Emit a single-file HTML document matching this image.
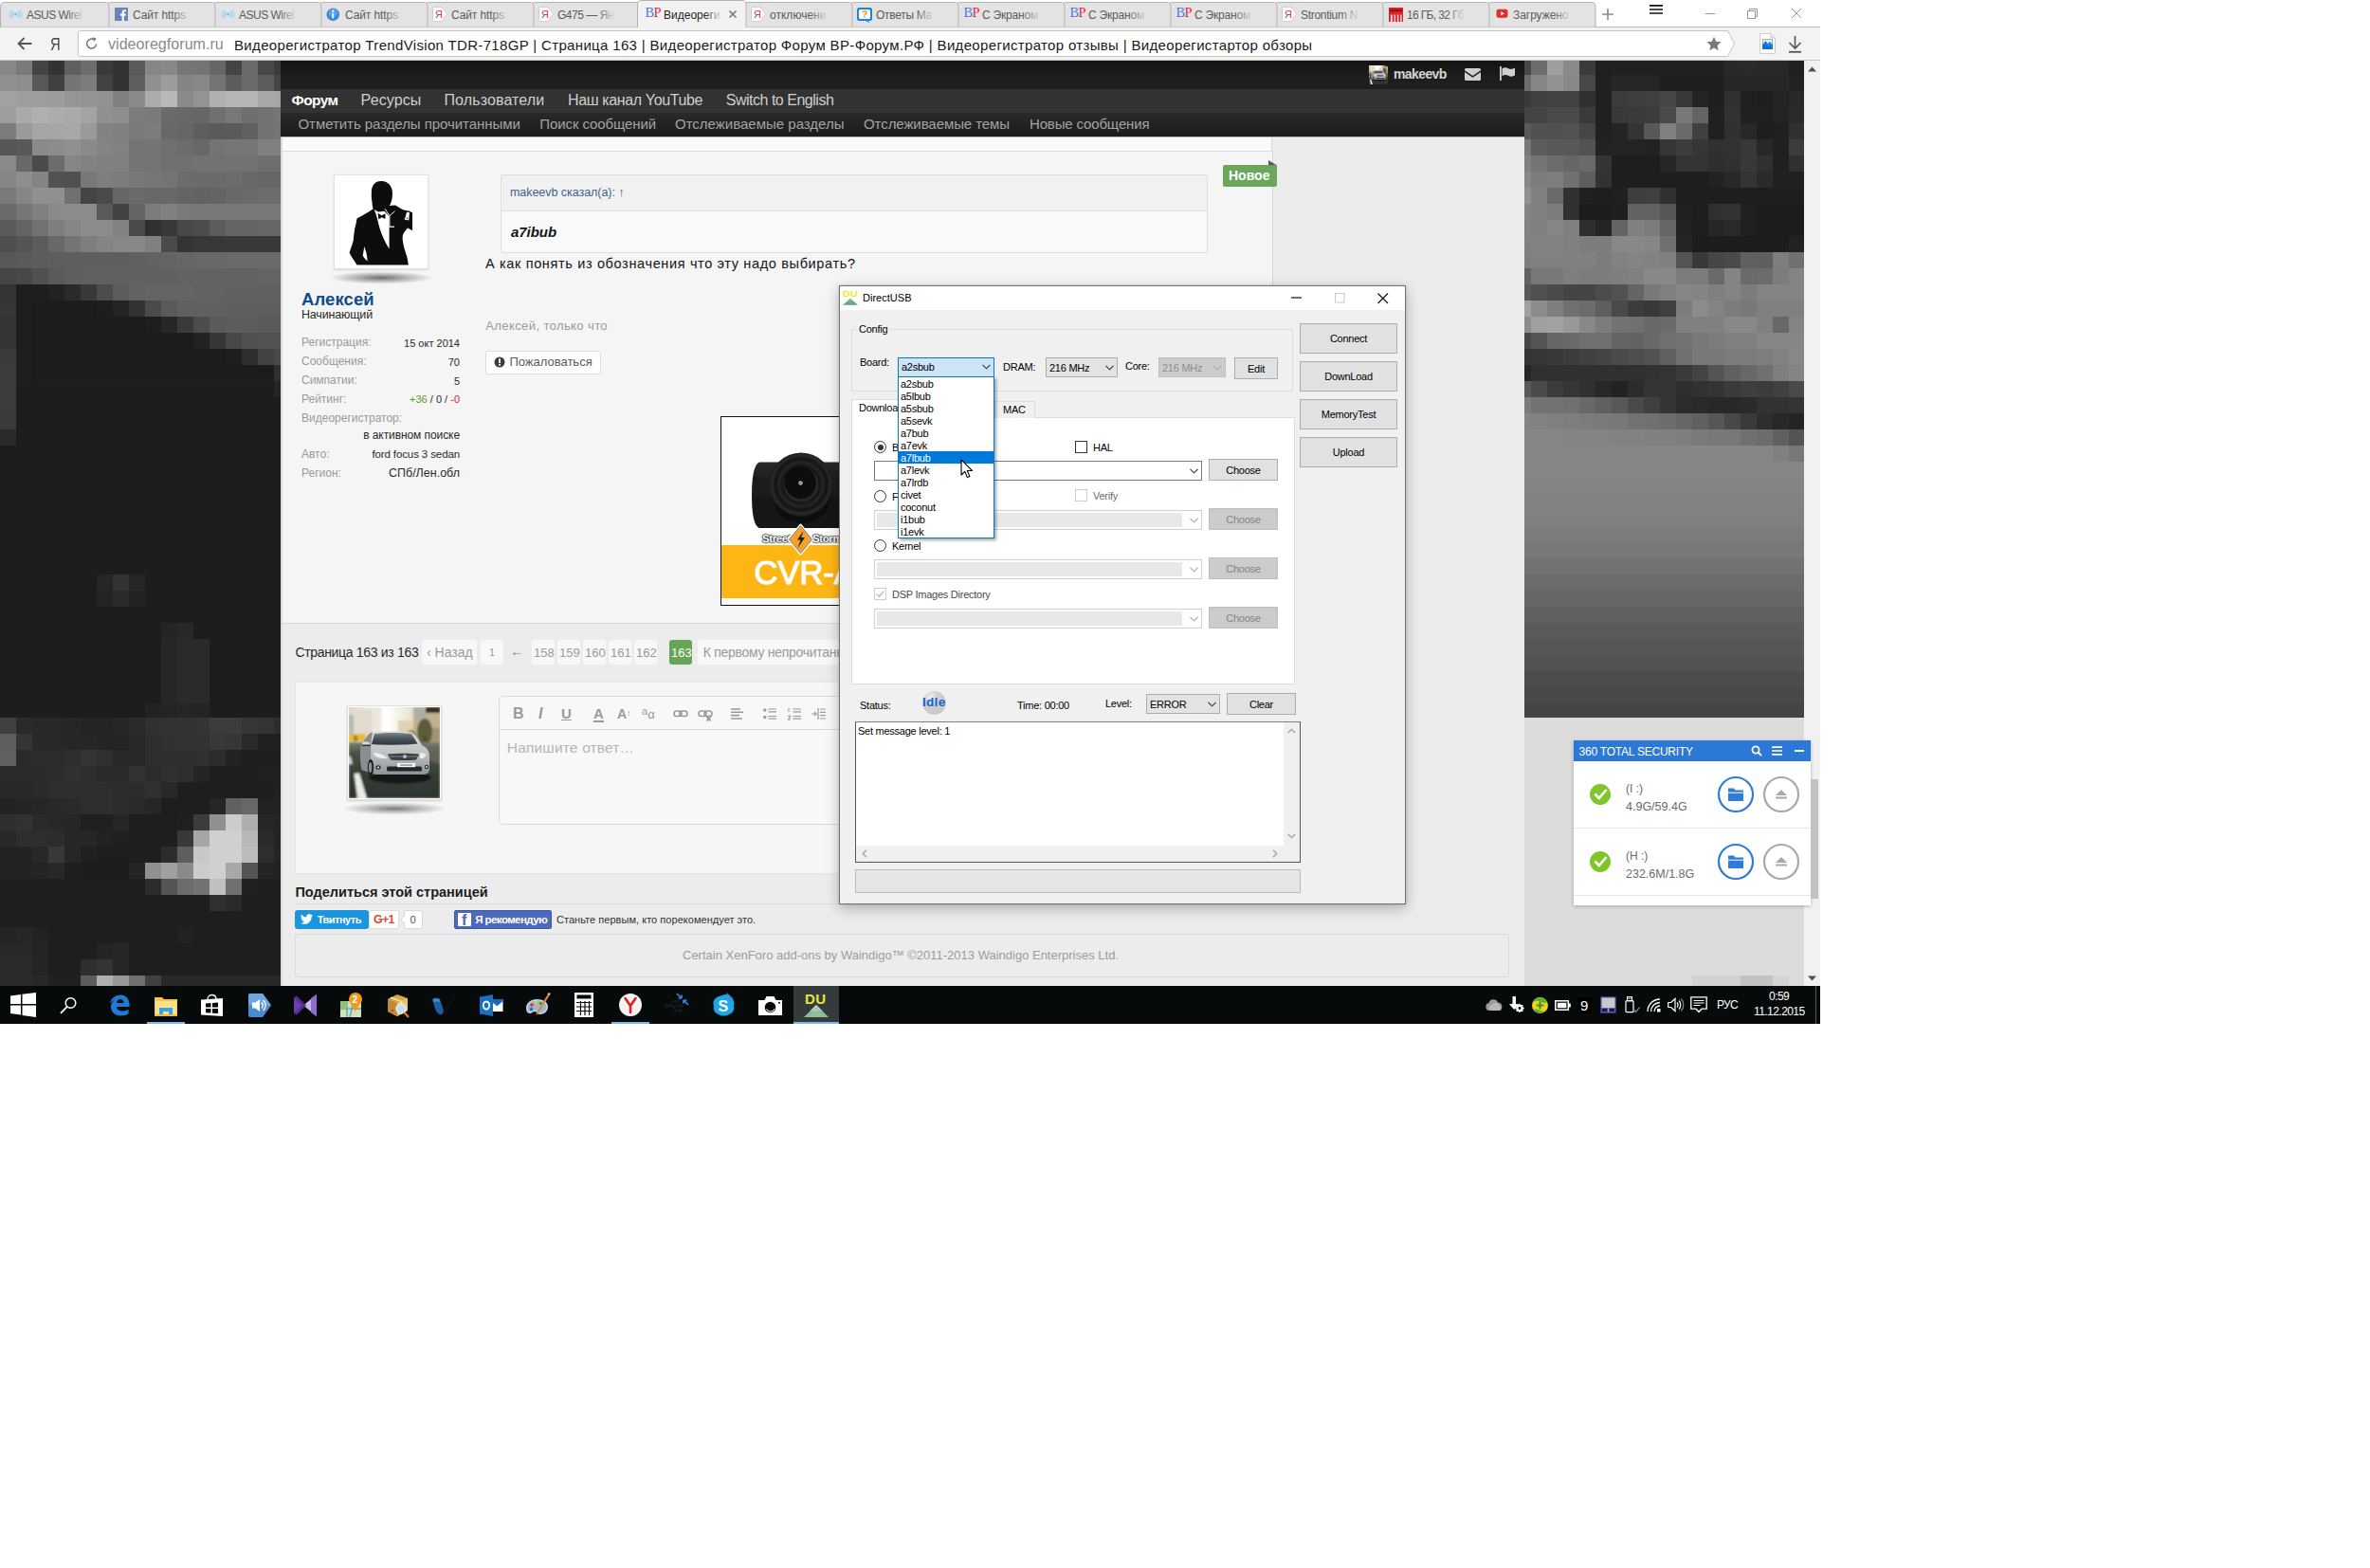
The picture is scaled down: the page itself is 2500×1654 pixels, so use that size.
<!DOCTYPE html>
<html lang="ru">
<head>
<meta charset="utf-8">
<title>DirectUSB screenshot</title>
<style>
*{box-sizing:border-box;margin:0;padding:0}
html,body{width:2500px;height:1654px;background:#fff;overflow:hidden}
body{font-family:"Liberation Sans",sans-serif;font-size:13px;color:#141414;position:relative}
#scr{position:absolute;left:0;top:0;width:1920px;height:1080px;overflow:hidden;background:#ebebeb}
.a{position:absolute;white-space:nowrap;line-height:1}
.bgpix{position:absolute;left:0;top:0}
/* browser chrome */
#tabs{position:absolute;left:0;top:0;width:1920px;height:29px;background:#fff}
#tabstrip{position:absolute;left:0;top:0;width:1920px;height:29px}
.tab{position:absolute;top:1px;height:28px;width:115px;}
.tab .tx{position:absolute;left:28.500px;top:8.600px;font-size:12px;color:#5c5c5c;white-space:nowrap;line-height:1}
.tab .fade{position:absolute;left:70px;top:4px;width:19px;height:20px;background:linear-gradient(90deg,rgba(227,227,227,0),rgba(227,227,227,.85) 90%)}
.tab.act .fade{background:linear-gradient(90deg,rgba(242,242,242,0),rgba(242,242,242,.85) 90%);left:72px;width:17px}
.tab .ic{position:absolute;left:7px;top:5px;width:16px;height:16px}
#toolbar{position:absolute;left:0;top:29px;width:1920px;height:35px;background:#f3f3f3;z-index:2}
#addr{position:absolute;left:83px;top:4px;width:1745px;height:26px;background:#fff;border:1px solid #c9c9c9;border-right:none}

.lb{font-size:12px;color:#9a9a9a;margin-top:.85px}
.vl{right:1435px;font-size:11px;color:#2a2a2a;margin-top:.85px}
.pb{position:absolute;top:675px;height:26px;background:#f8f8f8;border-radius:3px}
.pt{top:681px;font-size:14px;color:#9a9a9a}
.pn{font-size:13px;top:682px}
.du{font-size:11px;color:#000;letter-spacing:-0.250px;margin-top:.85px}
.btn{background:#e1e1e1;border:1px solid #adadad;text-align:center}
.btn span{position:absolute;left:0;right:0;top:50%;margin-top:-4.800px;font-size:11px;line-height:11px;letter-spacing:-0.250px;color:#000}
.btn.bd{background:#cccccc;border-color:#bfbfbf}
.btn.bd span{color:#838383}
.rad{width:13px;height:13px;border:1px solid #333;border-radius:50%;background:#fff}
.rad i{position:absolute;left:2.500px;top:2.500px;width:6px;height:6px;border-radius:50%;background:#333}
.chk{width:13px;height:13px;border:1px solid #333;background:#fff}
.chk.dis{border-color:#ccc;background:#fff}
.cbd{width:346px;height:21px;background:#fff;border:1px solid #d0d0d0;box-shadow:inset 0 0 0 2px #fff}
.cbd:after{content:"";position:absolute;left:2px;top:2px;width:322px;height:15px;background:#e8e8e8}
.tk{position:absolute;top:1040px;height:40px}
#ttl{letter-spacing:0.337px}
#dom{letter-spacing:0.053px}
#mk{letter-spacing:-0.605px}
#n1{letter-spacing:-0.589px}
#n2{letter-spacing:0.101px}
#n3{letter-spacing:0.130px}
#n4{letter-spacing:-0.369px}
#n5{letter-spacing:-0.479px}
#s1{letter-spacing:-0.059px}
#s2{letter-spacing:-0.102px}
#s3{letter-spacing:0.000px}
#s4{letter-spacing:-0.080px}
#s5{letter-spacing:-0.152px}
#q1{letter-spacing:-0.048px}
#q2{letter-spacing:-0.057px}
#m1{letter-spacing:0.645px}
#t0{letter-spacing:-0.514px}
#t1{letter-spacing:-0.114px}
#t2{letter-spacing:-0.514px}
#t3{letter-spacing:-0.114px}
#t4{letter-spacing:-0.114px}
#t5{letter-spacing:-0.470px}
#t6{letter-spacing:0.013px}
#t7{letter-spacing:0.023px}
#t8{letter-spacing:-0.290px}
#t9{letter-spacing:-0.198px}
#t10{letter-spacing:-0.198px}
#t11{letter-spacing:-0.198px}
#t12{letter-spacing:-0.305px}
#t13{letter-spacing:-0.648px}
#t14{letter-spacing:-0.054px}
#u1{letter-spacing:0.096px}
#u2{letter-spacing:-0.169px}
#m2{letter-spacing:0.398px}
#pg{letter-spacing:-0.320px}
#sh{letter-spacing:0.003px}
#tw{letter-spacing:-0.496px}
#fbr{letter-spacing:-0.581px}
#fbt{letter-spacing:0.035px}
#dt{letter-spacing:0.017px}
#ts{letter-spacing:-0.226px}
#ru{letter-spacing:-0.744px}
#ck{letter-spacing:-0.540px}
#dt2{letter-spacing:-0.557px}
#v5{letter-spacing:-0.081px}
#v6{letter-spacing:-0.113px}
#pb9{letter-spacing:-0.288px}
#ph{letter-spacing:0.169px}
</style>
</head>
<body>
<div id="scr">
<div id="tabs">
<div class="a" style="left:0;top:28px;width:1920px;height:1px;background:#b9b9b9"></div>
<div class="tab" style="left:1567.5px"><svg class="a" style="left:0;top:0" width="118" height="28" viewBox="0 0 118 28"><path d="M0.500 28V6q0-4.500 4.500-4.500h106q4 0 4 4.500v22z" fill="#e3e3e3" stroke="#b3b3b3" stroke-width="1"/></svg><svg class="ic" viewBox="0 0 16 16" style="left:9px;top:8px;width:15px;height:12px"><rect y="1" width="16" height="12" rx="3" fill="#e02f2f"/><path d="M6.300 4.200v5.600L11 7z" fill="#fff"/></svg><span id="t14" class="tx">Загружено</span><span class="fade"></span></div>
<div class="tab" style="left:1455.5px"><svg class="a" style="left:0;top:0" width="118" height="28" viewBox="0 0 118 28"><path d="M0.500 28V6q0-4.500 4.500-4.500h106q4 0 4 4.500v22z" fill="#e3e3e3" stroke="#b3b3b3" stroke-width="1"/></svg><svg class="ic" viewBox="0 0 16 16" style="left:9px;top:6.500px;width:15px;height:15px"><rect width="16" height="16" fill="#d9232e"/><path d="M2 16V8h2v8zM6 16V8h1.500v8zM9.500 16V8H11v8zM13 16V8h1.500v8z" fill="#fff" opacity=".85"/><rect x="1" y="2" width="14" height="2.500" fill="#8e1218"/></svg><span id="t13" class="tx">16 ГБ, 32 Гб</span><span class="fade"></span></div>
<div class="tab" style="left:1343.5px"><svg class="a" style="left:0;top:0" width="118" height="28" viewBox="0 0 118 28"><path d="M0.500 28V6q0-4.500 4.500-4.500h106q4 0 4 4.500v22z" fill="#e3e3e3" stroke="#b3b3b3" stroke-width="1"/></svg><svg class="ic" viewBox="0 0 17 16" style="left:8px;top:6px;width:17px;height:16px"><path d="M1.500 .5h8.500l5.500 7.500-5.500 7.500H1.500q-1 0-1-1v-13q0-1 1-1z" fill="#fff" stroke="#cfcfcf" stroke-width="1"/><text x="3" y="12.300" font-family="Liberation Sans" font-size="11" fill="#d6393a">Я</text></svg><span id="t12" class="tx">Strontium N</span><span class="fade"></span></div>
<div class="tab" style="left:1231.5px"><svg class="a" style="left:0;top:0" width="118" height="28" viewBox="0 0 118 28"><path d="M0.500 28V6q0-4.500 4.500-4.500h106q4 0 4 4.500v22z" fill="#e3e3e3" stroke="#b3b3b3" stroke-width="1"/></svg><span class="a" style="left:9px;top:5px;font-family:'Liberation Serif',serif;font-size:14.500px;letter-spacing:-0.700px"><span style="color:#4a7be0">В</span><span style="color:#e0304a">Р</span></span><span id="t11" class="tx">С Экраном</span><span class="fade"></span></div>
<div class="tab" style="left:1119.5px"><svg class="a" style="left:0;top:0" width="118" height="28" viewBox="0 0 118 28"><path d="M0.500 28V6q0-4.500 4.500-4.500h106q4 0 4 4.500v22z" fill="#e3e3e3" stroke="#b3b3b3" stroke-width="1"/></svg><span class="a" style="left:9px;top:5px;font-family:'Liberation Serif',serif;font-size:14.500px;letter-spacing:-0.700px"><span style="color:#4a7be0">В</span><span style="color:#e0304a">Р</span></span><span id="t10" class="tx">С Экраном</span><span class="fade"></span></div>
<div class="tab" style="left:1007.5px"><svg class="a" style="left:0;top:0" width="118" height="28" viewBox="0 0 118 28"><path d="M0.500 28V6q0-4.500 4.500-4.500h106q4 0 4 4.500v22z" fill="#e3e3e3" stroke="#b3b3b3" stroke-width="1"/></svg><span class="a" style="left:9px;top:5px;font-family:'Liberation Serif',serif;font-size:14.500px;letter-spacing:-0.700px"><span style="color:#4a7be0">В</span><span style="color:#e0304a">Р</span></span><span id="t9" class="tx">С Экраном</span><span class="fade"></span></div>
<div class="tab" style="left:895.5px"><svg class="a" style="left:0;top:0" width="118" height="28" viewBox="0 0 118 28"><path d="M0.500 28V6q0-4.500 4.500-4.500h106q4 0 4 4.500v22z" fill="#e3e3e3" stroke="#b3b3b3" stroke-width="1"/></svg><svg class="ic" viewBox="0 0 16 16" style="left:8.500px;top:6.500px;width:16px;height:16px"><path d="M2.500 0h11A2.500 2.500 0 0 1 16 2.500v9a2.500 2.500 0 0 1-2.500 2.500H12l1.500 2.200L9 14H2.500A2.500 2.500 0 0 1 0 11.500v-9A2.500 2.500 0 0 1 2.500 0z" fill="#1b86d6"/><rect x="2" y="2" width="12" height="10" rx="1.500" fill="#fff"/><text x="4.800" y="11.200" font-family="Liberation Sans" font-size="11" font-weight="700" fill="#f59a1c">?</text></svg><span id="t8" class="tx">Ответы Ма</span><span class="fade"></span></div>
<div class="tab" style="left:783.5px"><svg class="a" style="left:0;top:0" width="118" height="28" viewBox="0 0 118 28"><path d="M0.500 28V6q0-4.500 4.500-4.500h106q4 0 4 4.500v22z" fill="#e3e3e3" stroke="#b3b3b3" stroke-width="1"/></svg><svg class="ic" viewBox="0 0 17 16" style="left:8px;top:6px;width:17px;height:16px"><path d="M1.500 .5h8.500l5.500 7.500-5.500 7.500H1.500q-1 0-1-1v-13q0-1 1-1z" fill="#fff" stroke="#cfcfcf" stroke-width="1"/><text x="3" y="12.300" font-family="Liberation Sans" font-size="11" fill="#d6393a">Я</text></svg><span id="t7" class="tx">отключени</span><span class="fade"></span></div>
<div class="tab" style="left:559.5px"><svg class="a" style="left:0;top:0" width="118" height="28" viewBox="0 0 118 28"><path d="M0.500 28V6q0-4.500 4.500-4.500h106q4 0 4 4.500v22z" fill="#e3e3e3" stroke="#b3b3b3" stroke-width="1"/></svg><svg class="ic" viewBox="0 0 17 16" style="left:8px;top:6px;width:17px;height:16px"><path d="M1.500 .5h8.500l5.500 7.500-5.500 7.500H1.500q-1 0-1-1v-13q0-1 1-1z" fill="#fff" stroke="#cfcfcf" stroke-width="1"/><text x="3" y="12.300" font-family="Liberation Sans" font-size="11" fill="#d6393a">Я</text></svg><span id="t5" class="tx">G475 — Ян</span><span class="fade"></span></div>
<div class="tab" style="left:447.5px"><svg class="a" style="left:0;top:0" width="118" height="28" viewBox="0 0 118 28"><path d="M0.500 28V6q0-4.500 4.500-4.500h106q4 0 4 4.500v22z" fill="#e3e3e3" stroke="#b3b3b3" stroke-width="1"/></svg><svg class="ic" viewBox="0 0 17 16" style="left:8px;top:6px;width:17px;height:16px"><path d="M1.500 .5h8.500l5.500 7.500-5.500 7.500H1.500q-1 0-1-1v-13q0-1 1-1z" fill="#fff" stroke="#cfcfcf" stroke-width="1"/><text x="3" y="12.300" font-family="Liberation Sans" font-size="11" fill="#d6393a">Я</text></svg><span id="t4" class="tx">Сайт https:</span><span class="fade"></span></div>
<div class="tab" style="left:335.5px"><svg class="a" style="left:0;top:0" width="118" height="28" viewBox="0 0 118 28"><path d="M0.500 28V6q0-4.500 4.500-4.500h106q4 0 4 4.500v22z" fill="#e3e3e3" stroke="#b3b3b3" stroke-width="1"/></svg><svg class="ic" viewBox="0 0 16 16" style="left:8.800px;top:6.500px;width:14.500px;height:14.500px"><circle cx="8" cy="8" r="7.5" fill="#3d8ad6"/><circle cx="8" cy="6" r="5" fill="#6eb0ea" opacity=".6"/><rect x="7" y="6.500" width="2" height="6" fill="#fff"/><circle cx="8" cy="4.300" r="1.200" fill="#fff"/></svg><span id="t3" class="tx">Сайт https:</span><span class="fade"></span></div>
<div class="tab" style="left:223.5px"><svg class="a" style="left:0;top:0" width="118" height="28" viewBox="0 0 118 28"><path d="M0.500 28V6q0-4.500 4.500-4.500h106q4 0 4 4.500v22z" fill="#e3e3e3" stroke="#b3b3b3" stroke-width="1"/></svg><svg class="ic" viewBox="0 0 16 16" style="left:9px;top:6.500px;width:15px;height:15px"><circle cx="8" cy="7.5" r="1.6" fill="#6cc3ea"/><path d="M5.3 4.6a4 4 0 0 0 0 5.8M10.7 4.6a4 4 0 0 1 0 5.8" stroke="#7cc9ec" stroke-width="1.3" fill="none"/><path d="M3.2 2.8a6.6 6.6 0 0 0 0 9.4M12.8 2.8a6.6 6.6 0 0 1 0 9.4" stroke="#9bd6f0" stroke-width="1.3" fill="none"/></svg><span id="t2" class="tx">ASUS Wirel</span><span class="fade"></span></div>
<div class="tab" style="left:111.5px"><svg class="a" style="left:0;top:0" width="118" height="28" viewBox="0 0 118 28"><path d="M0.500 28V6q0-4.500 4.500-4.500h106q4 0 4 4.500v22z" fill="#e3e3e3" stroke="#b3b3b3" stroke-width="1"/></svg><svg class="ic" viewBox="0 0 16 16" style="left:9.500px;top:7px;width:14px;height:14px"><rect width="16" height="16" fill="#6a83b8"/><path d="M11.2 16V9.9h2l.3-2.4h-2.3V6c0-.7.2-1.2 1.2-1.2h1.2V2.7c-.2 0-1-.1-1.8-.1-1.8 0-3 1.1-3 3.100v1.800H6.700v2.400h2.100V16z" fill="#fff"/></svg><span id="t1" class="tx">Сайт https:</span><span class="fade"></span></div>
<div class="tab" style="left:-0.5px"><!--t0--><svg class="a" style="left:0;top:0" width="118" height="28" viewBox="0 0 118 28"><path d="M0.500 28V6q0-4.500 4.500-4.500h106q4 0 4 4.500v22z" fill="#e3e3e3" stroke="#b3b3b3" stroke-width="1"/></svg><svg class="ic" viewBox="0 0 16 16" style="left:9px;top:6.500px;width:15px;height:15px"><circle cx="8" cy="7.5" r="1.6" fill="#6cc3ea"/><path d="M5.3 4.6a4 4 0 0 0 0 5.8M10.7 4.6a4 4 0 0 1 0 5.8" stroke="#7cc9ec" stroke-width="1.3" fill="none"/><path d="M3.2 2.8a6.6 6.6 0 0 0 0 9.4M12.8 2.8a6.6 6.6 0 0 1 0 9.4" stroke="#9bd6f0" stroke-width="1.3" fill="none"/></svg><span id="t0" class="tx">ASUS Wirel</span><span class="fade"></span></div>
<div class="tab act" style="left:671.5px;top:0;height:29px"><svg class="a" style="left:0;top:0" width="118" height="29" viewBox="0 0 118 29"><path d="M0.500 29V5q0-4.500 4.500-4.500h106q4 0 4 4.500v24z" fill="#f2f2f2" stroke="#b3b3b3" stroke-width="1"/><rect x="1" y="28" width="114" height="1" fill="#f2f2f2"/></svg><span class="a" style="left:9px;top:6px;font-family:'Liberation Serif',serif;font-size:14.500px;letter-spacing:-0.700px"><span style="color:#4a7be0">В</span><span style="color:#e0304a">Р</span></span><span id="t6" class="tx" style="color:#222;top:9.600px">Видеореги</span><span class="fade"></span><svg class="a" style="left:96px;top:10px" width="10" height="10" viewBox="0 0 10 10"><path d="M1.500 1.500l7 7M8.500 1.500l-7 7" stroke="#7a7a7a" stroke-width="1.700"/></svg></div>
<svg class="a" style="left:1689px;top:8px" width="14" height="14" viewBox="0 0 14 14"><path d="M7 1v12M1 7h12" stroke="#8c8c8c" stroke-width="1.600"/></svg>
<svg class="a" style="left:1740px;top:4px" width="14" height="12" viewBox="0 0 14 12"><path d="M0 1.800h14M0 6h14M0 10h14" stroke="#111" stroke-width="1.700"/></svg>
<svg class="a" style="left:1799px;top:9px" width="10" height="10" viewBox="0 0 10 10"><path d="M0 5.500h10" stroke="#999" stroke-width="1"/></svg>
<svg class="a" style="left:1843px;top:9px" width="11" height="11" viewBox="0 0 11 11"><path d="M2.500 2.500v-2h8v8h-2" stroke="#999" fill="none"/><rect x=".5" y="2.500" width="8" height="8" stroke="#999" fill="none"/></svg>
<svg class="a" style="left:1890px;top:9px" width="10" height="10" viewBox="0 0 10 10"><path d="M0 0l10 10M10 0L0 10" stroke="#999" stroke-width="1"/></svg>
</div>
<div id="toolbar">
<div class="a" style="left:0;top:33.500px;width:1920px;height:1.500px;background:linear-gradient(#ededed,#9a9a9a)"></div>
<svg class="a" style="left:18px;top:10px" width="16" height="14" viewBox="0 0 16 14"><path d="M15.500 7H2M7.500 1L1.500 7l6 6" stroke="#555" stroke-width="1.800" fill="none"/></svg>
<span class="a" style="left:53px;top:8px;font-size:19px;color:#444;transform:scaleX(.78);transform-origin:0 0">Я</span>
<svg class="a" style="left:82px;top:3px" width="1750" height="28" viewBox="0 0 1750 28"><path d="M2.500 .5H1740.500L1747.500 14 1740.500 27.500H2.500q-2 0-2-2V2.500q0-2 2-2z" fill="#fff" stroke="#c3c3c3"/></svg>
<svg class="a" style="left:90px;top:9px" width="14" height="15" viewBox="0 0 14 15"><path d="M11.600 8.500a5 5 0 1 1-2.100-4.600" stroke="#777" stroke-width="1.500" fill="none"/><path d="M7.500 1.200l4.200 1.200-2.400 3.400z" fill="#777"/></svg>
<span id="dom" class="a" style="left:114px;top:10px;font-size:16px;color:#8a8a8a">videoregforum.ru</span>
<span id="ttl" class="a" style="left:247px;top:10.700px;font-size:15px;color:#1a1a1a">Видеорегистратор TrendVision TDR-718GP | Страница 163 | Видеорегистратор Форум ВР-Форум.РФ | Видеорегистратор отзывы | Видеорегистартор обзоры</span>
<svg class="a" style="left:1800px;top:9px" width="16" height="16" viewBox="0 0 16 16"><path d="M8 .8l2.200 5 5.300.5-4 3.600 1.200 5.300L8 12.400 3.300 15.200l1.200-5.300-4-3.600 5.300-.5z" fill="#7a7a7a"/></svg>
<svg class="a" style="left:1856px;top:6px" width="17" height="22" viewBox="0 0 17 22"><path d="M.5 .5h11.500l4.500 4.500v16.500H.5z" fill="#fdfdfd" stroke="#cfcfcf"/><path d="M12 .5v4.500h4.500" fill="#e8e8e8" stroke="#cfcfcf"/><rect x="3" y="6.500" width="11" height="10.500" fill="#0a6fd8"/><path d="M3 15l3.500-5 2.200 3 1.800-2.200L14 15v2H3z" fill="#9fd0ff"/><path d="M3 17v-2.500l3.500-4.500 2.300 3.200 1.700-2 3.500 4V17z" fill="#0a6fd8"/><path d="M3.500 7h10v5l-2.800-3-1.900 2.300L6.500 8 3.500 12z" fill="#e9f4ff"/></svg>
<svg class="a" style="left:1886px;top:9px" width="15" height="18" viewBox="0 0 15 18"><path d="M7.500 0v12.500M1.500 7l6 6 6-6" stroke="#555" stroke-width="1.600" fill="none"/><path d="M1 16.800h13" stroke="#555" stroke-width="1.800"/></svg>
</div>
<svg class="bgpix" width="1920" height="1080" viewBox="0 0 1920 1080" shape-rendering="crispEdges">
<rect x="0" y="62" width="296" height="978" fill="#1d1d1d"/>
<rect x="0" y="62" width="17" height="17" fill="#888888"/>
<rect x="17" y="62" width="17" height="17" fill="#7a7a7a"/>
<rect x="34" y="62" width="17" height="17" fill="#444444"/>
<rect x="51" y="62" width="17" height="17" fill="#333333"/>
<rect x="68" y="62" width="17" height="17" fill="#606060"/>
<rect x="85" y="62" width="17" height="17" fill="#6c6c6c"/>
<rect x="102" y="62" width="17" height="17" fill="#3a3a3a"/>
<rect x="119" y="62" width="17" height="17" fill="#333333"/>
<rect x="136" y="62" width="17" height="17" fill="#5a5a5a"/>
<rect x="153" y="62" width="17" height="17" fill="#868686"/>
<rect x="170" y="62" width="17" height="17" fill="#888888"/>
<rect x="187" y="62" width="17" height="17" fill="#767676"/>
<rect x="204" y="62" width="17" height="17" fill="#747474"/>
<rect x="221" y="62" width="17" height="17" fill="#666666"/>
<rect x="238" y="62" width="17" height="17" fill="#444444"/>
<rect x="255" y="62" width="17" height="17" fill="#6a6a6a"/>
<rect x="272" y="62" width="17" height="17" fill="#484848"/>
<rect x="289" y="62" width="7" height="17" fill="#3a3a3a"/>
<rect x="0" y="79" width="17" height="17" fill="#909090"/>
<rect x="17" y="79" width="17" height="17" fill="#8e8e8e"/>
<rect x="34" y="79" width="17" height="17" fill="#585858"/>
<rect x="51" y="79" width="17" height="17" fill="#404040"/>
<rect x="68" y="79" width="17" height="17" fill="#747474"/>
<rect x="85" y="79" width="17" height="17" fill="#7c7c7c"/>
<rect x="102" y="79" width="17" height="17" fill="#424242"/>
<rect x="119" y="79" width="17" height="17" fill="#333333"/>
<rect x="136" y="79" width="17" height="17" fill="#5e5e5e"/>
<rect x="153" y="79" width="17" height="17" fill="#909090"/>
<rect x="170" y="79" width="17" height="17" fill="#9c9c9c"/>
<rect x="187" y="79" width="17" height="17" fill="#848484"/>
<rect x="204" y="79" width="17" height="17" fill="#888888"/>
<rect x="221" y="79" width="17" height="17" fill="#747474"/>
<rect x="238" y="79" width="17" height="17" fill="#5c5c5c"/>
<rect x="255" y="79" width="17" height="17" fill="#6a6a6a"/>
<rect x="272" y="79" width="17" height="17" fill="#5c5c5c"/>
<rect x="289" y="79" width="7" height="17" fill="#444444"/>
<rect x="0" y="96" width="17" height="17" fill="#a2a2a2"/>
<rect x="17" y="96" width="34" height="17" fill="#9e9e9e"/>
<rect x="51" y="96" width="17" height="17" fill="#9c9c9c"/>
<rect x="68" y="96" width="17" height="17" fill="#969696"/>
<rect x="85" y="96" width="17" height="17" fill="#949494"/>
<rect x="102" y="96" width="17" height="17" fill="#929292"/>
<rect x="119" y="96" width="17" height="17" fill="#808080"/>
<rect x="136" y="96" width="17" height="17" fill="#8a8a8a"/>
<rect x="153" y="96" width="17" height="17" fill="#acacac"/>
<rect x="170" y="96" width="17" height="17" fill="#b8b8b8"/>
<rect x="187" y="96" width="17" height="17" fill="#8a8a8a"/>
<rect x="204" y="96" width="17" height="17" fill="#949494"/>
<rect x="221" y="96" width="17" height="17" fill="#b0b0b0"/>
<rect x="238" y="96" width="34" height="17" fill="#b6b6b6"/>
<rect x="272" y="96" width="17" height="17" fill="#a8a8a8"/>
<rect x="289" y="96" width="7" height="17" fill="#a6a6a6"/>
<rect x="0" y="113" width="17" height="17" fill="#9e9e9e"/>
<rect x="17" y="113" width="17" height="17" fill="#aaaaaa"/>
<rect x="34" y="113" width="17" height="17" fill="#b0b0b0"/>
<rect x="51" y="113" width="17" height="17" fill="#acacac"/>
<rect x="68" y="113" width="17" height="17" fill="#aaaaaa"/>
<rect x="85" y="113" width="17" height="17" fill="#a4a4a4"/>
<rect x="102" y="113" width="17" height="17" fill="#909090"/>
<rect x="119" y="113" width="17" height="17" fill="#8e8e8e"/>
<rect x="136" y="113" width="17" height="17" fill="#7c7c7c"/>
<rect x="153" y="113" width="17" height="17" fill="#7a7a7a"/>
<rect x="170" y="113" width="17" height="17" fill="#6a6a6a"/>
<rect x="187" y="113" width="17" height="17" fill="#686868"/>
<rect x="204" y="113" width="17" height="17" fill="#666666"/>
<rect x="221" y="113" width="17" height="17" fill="#707070"/>
<rect x="238" y="113" width="17" height="17" fill="#787878"/>
<rect x="255" y="113" width="17" height="17" fill="#6e6e6e"/>
<rect x="272" y="113" width="17" height="17" fill="#727272"/>
<rect x="289" y="113" width="7" height="17" fill="#767676"/>
<rect x="0" y="130" width="17" height="17" fill="#7c7c7c"/>
<rect x="17" y="130" width="17" height="17" fill="#9a9a9a"/>
<rect x="34" y="130" width="34" height="17" fill="#a6a6a6"/>
<rect x="68" y="130" width="17" height="17" fill="#a8a8a8"/>
<rect x="85" y="130" width="17" height="17" fill="#9a9a9a"/>
<rect x="102" y="130" width="17" height="17" fill="#828282"/>
<rect x="119" y="130" width="17" height="17" fill="#808080"/>
<rect x="136" y="130" width="17" height="17" fill="#7a7a7a"/>
<rect x="153" y="130" width="17" height="17" fill="#7c7c7c"/>
<rect x="170" y="130" width="17" height="17" fill="#686868"/>
<rect x="187" y="130" width="17" height="17" fill="#666666"/>
<rect x="204" y="130" width="17" height="17" fill="#5e5e5e"/>
<rect x="221" y="130" width="34" height="17" fill="#5a5a5a"/>
<rect x="255" y="130" width="17" height="17" fill="#606060"/>
<rect x="272" y="130" width="17" height="17" fill="#727272"/>
<rect x="289" y="130" width="7" height="17" fill="#747474"/>
<rect x="0" y="147" width="17" height="17" fill="#565656"/>
<rect x="17" y="147" width="17" height="17" fill="#585858"/>
<rect x="34" y="147" width="17" height="17" fill="#8a8a8a"/>
<rect x="51" y="147" width="17" height="17" fill="#8c8c8c"/>
<rect x="68" y="147" width="17" height="17" fill="#909090"/>
<rect x="85" y="147" width="17" height="17" fill="#8a8a8a"/>
<rect x="102" y="147" width="17" height="17" fill="#848484"/>
<rect x="119" y="147" width="17" height="17" fill="#828282"/>
<rect x="136" y="147" width="34" height="17" fill="#747474"/>
<rect x="170" y="147" width="17" height="17" fill="#707070"/>
<rect x="187" y="147" width="17" height="17" fill="#6c6c6c"/>
<rect x="204" y="147" width="17" height="17" fill="#686868"/>
<rect x="221" y="147" width="17" height="17" fill="#747474"/>
<rect x="238" y="147" width="34" height="17" fill="#767676"/>
<rect x="272" y="147" width="24" height="17" fill="#808080"/>
<rect x="0" y="164" width="17" height="17" fill="#8a8a8a"/>
<rect x="17" y="164" width="17" height="17" fill="#686868"/>
<rect x="34" y="164" width="17" height="17" fill="#4a4a4a"/>
<rect x="51" y="164" width="17" height="17" fill="#6c6c6c"/>
<rect x="68" y="164" width="17" height="17" fill="#868686"/>
<rect x="85" y="164" width="17" height="17" fill="#828282"/>
<rect x="102" y="164" width="34" height="17" fill="#808080"/>
<rect x="136" y="164" width="34" height="17" fill="#747474"/>
<rect x="170" y="164" width="34" height="17" fill="#707070"/>
<rect x="204" y="164" width="68" height="17" fill="#727272"/>
<rect x="272" y="164" width="24" height="17" fill="#6e6e6e"/>
<rect x="0" y="181" width="17" height="17" fill="#868686"/>
<rect x="17" y="181" width="17" height="17" fill="#8e8e8e"/>
<rect x="34" y="181" width="17" height="17" fill="#848484"/>
<rect x="51" y="181" width="17" height="17" fill="#525252"/>
<rect x="68" y="181" width="17" height="17" fill="#505050"/>
<rect x="85" y="181" width="17" height="17" fill="#787878"/>
<rect x="102" y="181" width="17" height="17" fill="#7e7e7e"/>
<rect x="119" y="181" width="17" height="17" fill="#7c7c7c"/>
<rect x="136" y="181" width="17" height="17" fill="#787878"/>
<rect x="153" y="181" width="17" height="17" fill="#767676"/>
<rect x="170" y="181" width="17" height="17" fill="#747474"/>
<rect x="187" y="181" width="17" height="17" fill="#6c6c6c"/>
<rect x="204" y="181" width="34" height="17" fill="#6a6a6a"/>
<rect x="238" y="181" width="17" height="17" fill="#6c6c6c"/>
<rect x="255" y="181" width="17" height="17" fill="#686868"/>
<rect x="272" y="181" width="24" height="17" fill="#666666"/>
<rect x="0" y="198" width="17" height="17" fill="#7a7a7a"/>
<rect x="17" y="198" width="17" height="17" fill="#868686"/>
<rect x="34" y="198" width="34" height="17" fill="#909090"/>
<rect x="68" y="198" width="17" height="17" fill="#707070"/>
<rect x="85" y="198" width="17" height="17" fill="#444444"/>
<rect x="102" y="198" width="17" height="17" fill="#4a4a4a"/>
<rect x="119" y="198" width="17" height="17" fill="#666666"/>
<rect x="136" y="198" width="17" height="17" fill="#6a6a6a"/>
<rect x="153" y="198" width="34" height="17" fill="#686868"/>
<rect x="187" y="198" width="17" height="17" fill="#646464"/>
<rect x="204" y="198" width="17" height="17" fill="#626262"/>
<rect x="221" y="198" width="17" height="17" fill="#646464"/>
<rect x="238" y="198" width="17" height="17" fill="#686868"/>
<rect x="255" y="198" width="17" height="17" fill="#6a6a6a"/>
<rect x="272" y="198" width="24" height="17" fill="#6c6c6c"/>
<rect x="0" y="215" width="17" height="17" fill="#6a6a6a"/>
<rect x="17" y="215" width="17" height="17" fill="#767676"/>
<rect x="34" y="215" width="17" height="17" fill="#808080"/>
<rect x="51" y="215" width="17" height="17" fill="#8a8a8a"/>
<rect x="68" y="215" width="34" height="17" fill="#8c8c8c"/>
<rect x="102" y="215" width="17" height="17" fill="#5a5a5a"/>
<rect x="119" y="215" width="17" height="17" fill="#424242"/>
<rect x="136" y="215" width="17" height="17" fill="#646464"/>
<rect x="153" y="215" width="17" height="17" fill="#7c7c7c"/>
<rect x="170" y="215" width="17" height="17" fill="#808080"/>
<rect x="187" y="215" width="17" height="17" fill="#7a7a7a"/>
<rect x="204" y="215" width="92" height="17" fill="#787878"/>
<rect x="0" y="232" width="17" height="17" fill="#5a5a5a"/>
<rect x="17" y="232" width="17" height="17" fill="#646464"/>
<rect x="34" y="232" width="17" height="17" fill="#727272"/>
<rect x="51" y="232" width="17" height="17" fill="#7e7e7e"/>
<rect x="68" y="232" width="17" height="17" fill="#868686"/>
<rect x="85" y="232" width="34" height="17" fill="#8c8c8c"/>
<rect x="119" y="232" width="17" height="17" fill="#828282"/>
<rect x="136" y="232" width="17" height="17" fill="#4a4a4a"/>
<rect x="153" y="232" width="17" height="17" fill="#303030"/>
<rect x="170" y="232" width="17" height="17" fill="#383838"/>
<rect x="187" y="232" width="17" height="17" fill="#484848"/>
<rect x="204" y="232" width="17" height="17" fill="#4c4c4c"/>
<rect x="221" y="232" width="17" height="17" fill="#5c5c5c"/>
<rect x="238" y="232" width="34" height="17" fill="#646464"/>
<rect x="272" y="232" width="24" height="17" fill="#666666"/>
<rect x="0" y="249" width="17" height="17" fill="#4e4e4e"/>
<rect x="17" y="249" width="17" height="17" fill="#545454"/>
<rect x="34" y="249" width="17" height="17" fill="#5c5c5c"/>
<rect x="51" y="249" width="17" height="17" fill="#686868"/>
<rect x="68" y="249" width="17" height="17" fill="#747474"/>
<rect x="85" y="249" width="17" height="17" fill="#7e7e7e"/>
<rect x="102" y="249" width="17" height="17" fill="#848484"/>
<rect x="119" y="249" width="34" height="17" fill="#888888"/>
<rect x="153" y="249" width="17" height="17" fill="#808080"/>
<rect x="170" y="249" width="17" height="17" fill="#4a4a4a"/>
<rect x="187" y="249" width="17" height="17" fill="#343434"/>
<rect x="204" y="249" width="92" height="17" fill="#383838"/>
<rect x="0" y="266" width="17" height="17" fill="#585858"/>
<rect x="17" y="266" width="17" height="17" fill="#5a5a5a"/>
<rect x="34" y="266" width="17" height="17" fill="#5c5c5c"/>
<rect x="51" y="266" width="85" height="17" fill="#5e5e5e"/>
<rect x="136" y="266" width="17" height="17" fill="#606060"/>
<rect x="153" y="266" width="17" height="17" fill="#626262"/>
<rect x="170" y="266" width="17" height="17" fill="#646464"/>
<rect x="187" y="266" width="17" height="17" fill="#666666"/>
<rect x="204" y="266" width="34" height="17" fill="#686868"/>
<rect x="238" y="266" width="58" height="17" fill="#6a6a6a"/>
<rect x="0" y="283" width="17" height="17" fill="#464646"/>
<rect x="17" y="283" width="17" height="17" fill="#484848"/>
<rect x="34" y="283" width="17" height="17" fill="#505050"/>
<rect x="51" y="283" width="17" height="17" fill="#5a5a5a"/>
<rect x="68" y="283" width="17" height="17" fill="#5e5e5e"/>
<rect x="85" y="283" width="102" height="17" fill="#606060"/>
<rect x="187" y="283" width="85" height="17" fill="#626262"/>
<rect x="272" y="283" width="24" height="17" fill="#646464"/>
<rect x="0" y="300" width="17" height="17" fill="#343434"/>
<rect x="17" y="300" width="34" height="17" fill="#1e1e1e"/>
<rect x="51" y="300" width="17" height="17" fill="#222222"/>
<rect x="68" y="300" width="17" height="17" fill="#2a2a2a"/>
<rect x="85" y="300" width="17" height="17" fill="#383838"/>
<rect x="102" y="300" width="17" height="17" fill="#4c4c4c"/>
<rect x="119" y="300" width="17" height="17" fill="#5c5c5c"/>
<rect x="136" y="300" width="17" height="17" fill="#626262"/>
<rect x="153" y="300" width="51" height="17" fill="#646464"/>
<rect x="204" y="300" width="34" height="17" fill="#626262"/>
<rect x="238" y="300" width="58" height="17" fill="#606060"/>
<rect x="0" y="317" width="17" height="17" fill="#363636"/>
<rect x="17" y="317" width="17" height="17" fill="#1e1e1e"/>
<rect x="34" y="317" width="68" height="17" fill="#1c1c1c"/>
<rect x="102" y="317" width="17" height="17" fill="#1e1e1e"/>
<rect x="119" y="317" width="17" height="17" fill="#242424"/>
<rect x="136" y="317" width="17" height="17" fill="#323232"/>
<rect x="153" y="317" width="17" height="17" fill="#4a4a4a"/>
<rect x="170" y="317" width="17" height="17" fill="#5a5a5a"/>
<rect x="187" y="317" width="51" height="17" fill="#606060"/>
<rect x="238" y="317" width="58" height="17" fill="#5e5e5e"/>
<rect x="0" y="334" width="17" height="17" fill="#343434"/>
<rect x="17" y="334" width="17" height="17" fill="#1e1e1e"/>
<rect x="34" y="334" width="119" height="17" fill="#1c1c1c"/>
<rect x="153" y="334" width="17" height="17" fill="#1e1e1e"/>
<rect x="170" y="334" width="17" height="17" fill="#262626"/>
<rect x="187" y="334" width="17" height="17" fill="#3a3a3a"/>
<rect x="204" y="334" width="17" height="17" fill="#4c4c4c"/>
<rect x="221" y="334" width="17" height="17" fill="#5a5a5a"/>
<rect x="238" y="334" width="34" height="17" fill="#5c5c5c"/>
<rect x="272" y="334" width="24" height="17" fill="#5a5a5a"/>
<rect x="0" y="351" width="17" height="17" fill="#343434"/>
<rect x="17" y="351" width="17" height="17" fill="#1e1e1e"/>
<rect x="34" y="351" width="170" height="17" fill="#1c1c1c"/>
<rect x="204" y="351" width="17" height="17" fill="#222222"/>
<rect x="221" y="351" width="17" height="17" fill="#363636"/>
<rect x="238" y="351" width="17" height="17" fill="#484848"/>
<rect x="255" y="351" width="17" height="17" fill="#505050"/>
<rect x="272" y="351" width="24" height="17" fill="#525252"/>
<rect x="0" y="368" width="17" height="17" fill="#3a3a3a"/>
<rect x="17" y="368" width="17" height="17" fill="#1e1e1e"/>
<rect x="34" y="368" width="204" height="17" fill="#1c1c1c"/>
<rect x="238" y="368" width="17" height="17" fill="#1e1e1e"/>
<rect x="255" y="368" width="17" height="17" fill="#2e2e2e"/>
<rect x="272" y="368" width="17" height="17" fill="#424242"/>
<rect x="289" y="368" width="7" height="17" fill="#484848"/>
<rect x="0" y="385" width="17" height="17" fill="#3c3c3c"/>
<rect x="17" y="385" width="17" height="17" fill="#1e1e1e"/>
<rect x="34" y="385" width="255" height="17" fill="#1c1c1c"/>
<rect x="289" y="385" width="7" height="17" fill="#303030"/>
<rect x="0" y="402" width="17" height="17" fill="#3c3c3c"/>
<rect x="289" y="402" width="7" height="17" fill="#262626"/>
<rect x="0" y="419" width="17" height="17" fill="#3c3c3c"/>
<rect x="0" y="436" width="17" height="17" fill="#3a3a3a"/>
<rect x="0" y="453" width="17" height="17" fill="#2a2a2a"/>
<rect x="102" y="606" width="17" height="17" fill="#262626"/>
<rect x="119" y="606" width="17" height="17" fill="#323232"/>
<rect x="136" y="606" width="17" height="17" fill="#262626"/>
<rect x="102" y="623" width="17" height="17" fill="#242424"/>
<rect x="119" y="623" width="17" height="17" fill="#2a2a2a"/>
<rect x="136" y="623" width="17" height="17" fill="#222222"/>
<rect x="170" y="657" width="17" height="17" fill="#242424"/>
<rect x="187" y="657" width="17" height="17" fill="#282828"/>
<rect x="170" y="674" width="17" height="17" fill="#262626"/>
<rect x="187" y="674" width="34" height="17" fill="#2a2a2a"/>
<rect x="170" y="691" width="17" height="17" fill="#262626"/>
<rect x="187" y="691" width="34" height="17" fill="#2a2a2a"/>
<rect x="170" y="708" width="17" height="17" fill="#262626"/>
<rect x="187" y="708" width="34" height="17" fill="#2a2a2a"/>
<rect x="170" y="725" width="17" height="17" fill="#262626"/>
<rect x="187" y="725" width="34" height="17" fill="#2a2a2a"/>
<rect x="153" y="742" width="17" height="15" fill="#222222"/>
<rect x="170" y="742" width="17" height="15" fill="#242424"/>
<rect x="187" y="742" width="17" height="15" fill="#262626"/>
<rect x="204" y="742" width="17" height="15" fill="#242424"/>
<rect x="0" y="757" width="17" height="17" fill="#404040"/>
<rect x="17" y="757" width="17" height="17" fill="#2a2a2a"/>
<rect x="34" y="757" width="34" height="17" fill="#282828"/>
<rect x="68" y="757" width="17" height="17" fill="#262626"/>
<rect x="85" y="757" width="34" height="17" fill="#242424"/>
<rect x="119" y="757" width="17" height="17" fill="#262626"/>
<rect x="136" y="757" width="17" height="17" fill="#2a2a2a"/>
<rect x="153" y="757" width="17" height="17" fill="#303030"/>
<rect x="170" y="757" width="34" height="17" fill="#323232"/>
<rect x="204" y="757" width="17" height="17" fill="#343434"/>
<rect x="221" y="757" width="34" height="17" fill="#3c3c3c"/>
<rect x="255" y="757" width="17" height="17" fill="#363636"/>
<rect x="272" y="757" width="17" height="17" fill="#343434"/>
<rect x="289" y="757" width="7" height="17" fill="#2c2c2c"/>
<rect x="0" y="774" width="17" height="17" fill="#5e5e5e"/>
<rect x="17" y="774" width="17" height="17" fill="#343434"/>
<rect x="34" y="774" width="34" height="17" fill="#282828"/>
<rect x="68" y="774" width="34" height="17" fill="#262626"/>
<rect x="102" y="774" width="34" height="17" fill="#242424"/>
<rect x="136" y="774" width="17" height="17" fill="#282828"/>
<rect x="153" y="774" width="17" height="17" fill="#2e2e2e"/>
<rect x="170" y="774" width="17" height="17" fill="#303030"/>
<rect x="187" y="774" width="34" height="17" fill="#323232"/>
<rect x="221" y="774" width="17" height="17" fill="#383838"/>
<rect x="238" y="774" width="17" height="17" fill="#363636"/>
<rect x="255" y="774" width="17" height="17" fill="#2a2a2a"/>
<rect x="272" y="774" width="24" height="17" fill="#202020"/>
<rect x="0" y="791" width="17" height="17" fill="#606060"/>
<rect x="17" y="791" width="17" height="17" fill="#2a2a2a"/>
<rect x="34" y="791" width="34" height="17" fill="#2c2c2c"/>
<rect x="68" y="791" width="17" height="17" fill="#2e2e2e"/>
<rect x="85" y="791" width="17" height="17" fill="#343434"/>
<rect x="102" y="791" width="17" height="17" fill="#303030"/>
<rect x="119" y="791" width="34" height="17" fill="#282828"/>
<rect x="153" y="791" width="51" height="17" fill="#2e2e2e"/>
<rect x="204" y="791" width="17" height="17" fill="#303030"/>
<rect x="221" y="791" width="17" height="17" fill="#2c2c2c"/>
<rect x="238" y="791" width="17" height="17" fill="#222222"/>
<rect x="255" y="791" width="41" height="17" fill="#1e1e1e"/>
<rect x="0" y="808" width="51" height="17" fill="#2a2a2a"/>
<rect x="51" y="808" width="17" height="17" fill="#2c2c2c"/>
<rect x="68" y="808" width="17" height="17" fill="#303030"/>
<rect x="85" y="808" width="17" height="17" fill="#2e2e2e"/>
<rect x="102" y="808" width="34" height="17" fill="#2a2a2a"/>
<rect x="136" y="808" width="17" height="17" fill="#323232"/>
<rect x="153" y="808" width="17" height="17" fill="#2c2c2c"/>
<rect x="170" y="808" width="17" height="17" fill="#303030"/>
<rect x="187" y="808" width="17" height="17" fill="#2e2e2e"/>
<rect x="204" y="808" width="17" height="17" fill="#242424"/>
<rect x="221" y="808" width="51" height="17" fill="#1e1e1e"/>
<rect x="272" y="808" width="24" height="17" fill="#202020"/>
<rect x="0" y="825" width="34" height="17" fill="#282828"/>
<rect x="34" y="825" width="17" height="17" fill="#2a2a2a"/>
<rect x="51" y="825" width="68" height="17" fill="#2e2e2e"/>
<rect x="119" y="825" width="34" height="17" fill="#2c2c2c"/>
<rect x="153" y="825" width="17" height="17" fill="#303030"/>
<rect x="170" y="825" width="17" height="17" fill="#282828"/>
<rect x="187" y="825" width="102" height="17" fill="#1e1e1e"/>
<rect x="289" y="825" width="7" height="17" fill="#202020"/>
<rect x="0" y="842" width="17" height="17" fill="#222222"/>
<rect x="17" y="842" width="17" height="17" fill="#242424"/>
<rect x="34" y="842" width="17" height="17" fill="#262626"/>
<rect x="51" y="842" width="17" height="17" fill="#282828"/>
<rect x="68" y="842" width="17" height="17" fill="#2a2a2a"/>
<rect x="85" y="842" width="34" height="17" fill="#2e2e2e"/>
<rect x="119" y="842" width="17" height="17" fill="#2c2c2c"/>
<rect x="136" y="842" width="17" height="17" fill="#2a2a2a"/>
<rect x="153" y="842" width="17" height="17" fill="#262626"/>
<rect x="170" y="842" width="51" height="17" fill="#1e1e1e"/>
<rect x="221" y="842" width="17" height="17" fill="#262626"/>
<rect x="238" y="842" width="17" height="17" fill="#606060"/>
<rect x="255" y="842" width="17" height="17" fill="#686868"/>
<rect x="272" y="842" width="24" height="17" fill="#222222"/>
<rect x="0" y="859" width="17" height="17" fill="#2e2e2e"/>
<rect x="17" y="859" width="17" height="17" fill="#323232"/>
<rect x="34" y="859" width="17" height="17" fill="#2a2a2a"/>
<rect x="51" y="859" width="17" height="17" fill="#282828"/>
<rect x="68" y="859" width="17" height="17" fill="#262626"/>
<rect x="85" y="859" width="34" height="17" fill="#202020"/>
<rect x="119" y="859" width="17" height="17" fill="#262626"/>
<rect x="136" y="859" width="51" height="17" fill="#1e1e1e"/>
<rect x="187" y="859" width="17" height="17" fill="#202020"/>
<rect x="204" y="859" width="17" height="17" fill="#3c3c3c"/>
<rect x="221" y="859" width="17" height="17" fill="#909090"/>
<rect x="238" y="859" width="17" height="17" fill="#cccccc"/>
<rect x="255" y="859" width="17" height="17" fill="#aeaeae"/>
<rect x="272" y="859" width="17" height="17" fill="#262626"/>
<rect x="289" y="859" width="7" height="17" fill="#242424"/>
<rect x="0" y="876" width="17" height="17" fill="#282828"/>
<rect x="17" y="876" width="34" height="17" fill="#2e2e2e"/>
<rect x="51" y="876" width="17" height="17" fill="#2c2c2c"/>
<rect x="68" y="876" width="34" height="17" fill="#262626"/>
<rect x="102" y="876" width="17" height="17" fill="#222222"/>
<rect x="119" y="876" width="17" height="17" fill="#202020"/>
<rect x="136" y="876" width="51" height="17" fill="#1e1e1e"/>
<rect x="187" y="876" width="17" height="17" fill="#383838"/>
<rect x="204" y="876" width="17" height="17" fill="#a6a6a6"/>
<rect x="221" y="876" width="34" height="17" fill="#d0d0d0"/>
<rect x="255" y="876" width="17" height="17" fill="#b8b8b8"/>
<rect x="272" y="876" width="17" height="17" fill="#2a2a2a"/>
<rect x="289" y="876" width="7" height="17" fill="#242424"/>
<rect x="0" y="893" width="34" height="17" fill="#222222"/>
<rect x="34" y="893" width="17" height="17" fill="#282828"/>
<rect x="51" y="893" width="17" height="17" fill="#383838"/>
<rect x="68" y="893" width="17" height="17" fill="#262626"/>
<rect x="85" y="893" width="17" height="17" fill="#202020"/>
<rect x="102" y="893" width="68" height="17" fill="#1e1e1e"/>
<rect x="170" y="893" width="17" height="17" fill="#2c2c2c"/>
<rect x="187" y="893" width="17" height="17" fill="#5e5e5e"/>
<rect x="204" y="893" width="17" height="17" fill="#c8c8c8"/>
<rect x="221" y="893" width="34" height="17" fill="#d0d0d0"/>
<rect x="255" y="893" width="17" height="17" fill="#bcbcbc"/>
<rect x="272" y="893" width="17" height="17" fill="#2e2e2e"/>
<rect x="289" y="893" width="7" height="17" fill="#242424"/>
<rect x="0" y="910" width="34" height="17" fill="#222222"/>
<rect x="34" y="910" width="17" height="17" fill="#242424"/>
<rect x="51" y="910" width="17" height="17" fill="#282828"/>
<rect x="68" y="910" width="17" height="17" fill="#1e1e1e"/>
<rect x="85" y="910" width="51" height="17" fill="#1c1c1c"/>
<rect x="136" y="910" width="17" height="17" fill="#242424"/>
<rect x="153" y="910" width="17" height="17" fill="#909090"/>
<rect x="170" y="910" width="17" height="17" fill="#a0a0a0"/>
<rect x="187" y="910" width="17" height="17" fill="#8a8a8a"/>
<rect x="204" y="910" width="17" height="17" fill="#cccccc"/>
<rect x="221" y="910" width="17" height="17" fill="#d0d0d0"/>
<rect x="238" y="910" width="17" height="17" fill="#a8a8a8"/>
<rect x="255" y="910" width="17" height="17" fill="#545454"/>
<rect x="272" y="910" width="17" height="17" fill="#242424"/>
<rect x="289" y="910" width="7" height="17" fill="#222222"/>
<rect x="0" y="927" width="153" height="17" fill="#1e1e1e"/>
<rect x="153" y="927" width="17" height="17" fill="#2c2c2c"/>
<rect x="170" y="927" width="17" height="17" fill="#545454"/>
<rect x="187" y="927" width="17" height="17" fill="#6c6c6c"/>
<rect x="204" y="927" width="17" height="17" fill="#727272"/>
<rect x="221" y="927" width="17" height="17" fill="#c0c0c0"/>
<rect x="238" y="927" width="17" height="17" fill="#707070"/>
<rect x="255" y="927" width="17" height="17" fill="#202020"/>
<rect x="272" y="927" width="24" height="17" fill="#1e1e1e"/>
<rect x="0" y="944" width="221" height="17" fill="#1e1e1e"/>
<rect x="221" y="944" width="17" height="17" fill="#303030"/>
<rect x="238" y="944" width="17" height="17" fill="#2a2a2a"/>
<rect x="255" y="944" width="41" height="17" fill="#1e1e1e"/>
<rect x="0" y="961" width="296" height="17" fill="#1e1e1e"/>
<rect x="0" y="978" width="17" height="17" fill="#242424"/>
<rect x="17" y="978" width="17" height="17" fill="#262626"/>
<rect x="34" y="978" width="17" height="17" fill="#222222"/>
<rect x="51" y="978" width="136" height="17" fill="#1e1e1e"/>
<rect x="187" y="978" width="17" height="17" fill="#222222"/>
<rect x="204" y="978" width="92" height="17" fill="#1e1e1e"/>
<rect x="0" y="995" width="34" height="17" fill="#282828"/>
<rect x="34" y="995" width="17" height="17" fill="#242424"/>
<rect x="51" y="995" width="51" height="17" fill="#1e1e1e"/>
<rect x="102" y="995" width="17" height="17" fill="#242424"/>
<rect x="119" y="995" width="17" height="17" fill="#262626"/>
<rect x="136" y="995" width="160" height="17" fill="#1e1e1e"/>
<rect x="0" y="1012" width="34" height="17" fill="#2a2a2a"/>
<rect x="34" y="1012" width="17" height="17" fill="#242424"/>
<rect x="51" y="1012" width="34" height="17" fill="#1e1e1e"/>
<rect x="85" y="1012" width="17" height="17" fill="#2e2e2e"/>
<rect x="102" y="1012" width="17" height="17" fill="#343434"/>
<rect x="119" y="1012" width="17" height="17" fill="#262626"/>
<rect x="136" y="1012" width="160" height="17" fill="#1e1e1e"/>
<rect x="0" y="1029" width="34" height="11" fill="#2a2a2a"/>
<rect x="34" y="1029" width="17" height="11" fill="#282828"/>
<rect x="51" y="1029" width="34" height="11" fill="#202020"/>
<rect x="85" y="1029" width="17" height="11" fill="#5c5c5c"/>
<rect x="102" y="1029" width="17" height="11" fill="#b0b0b0"/>
<rect x="119" y="1029" width="17" height="11" fill="#989898"/>
<rect x="136" y="1029" width="17" height="11" fill="#707070"/>
<rect x="153" y="1029" width="17" height="11" fill="#404040"/>
<rect x="170" y="1029" width="126" height="11" fill="#282828"/>
<rect x="1608" y="62" width="7" height="17" fill="#484848"/>
<rect x="1615" y="62" width="17" height="17" fill="#6c6c6c"/>
<rect x="1632" y="62" width="17" height="17" fill="#9e9e9e"/>
<rect x="1649" y="62" width="17" height="17" fill="#8a8a8a"/>
<rect x="1666" y="62" width="17" height="17" fill="#3a3a3a"/>
<rect x="1683" y="62" width="136" height="17" fill="#202020"/>
<rect x="1819" y="62" width="17" height="17" fill="#282828"/>
<rect x="1836" y="62" width="17" height="17" fill="#2a2a2a"/>
<rect x="1853" y="62" width="34" height="17" fill="#282828"/>
<rect x="1887" y="62" width="16" height="17" fill="#202020"/>
<rect x="1608" y="79" width="7" height="17" fill="#6c6c6c"/>
<rect x="1615" y="79" width="17" height="17" fill="#868686"/>
<rect x="1632" y="79" width="17" height="17" fill="#929292"/>
<rect x="1649" y="79" width="17" height="17" fill="#888888"/>
<rect x="1666" y="79" width="17" height="17" fill="#484848"/>
<rect x="1683" y="79" width="17" height="17" fill="#202020"/>
<rect x="1700" y="79" width="51" height="17" fill="#262626"/>
<rect x="1751" y="79" width="68" height="17" fill="#1e1e1e"/>
<rect x="1819" y="79" width="68" height="17" fill="#262626"/>
<rect x="1887" y="79" width="16" height="17" fill="#222222"/>
<rect x="1608" y="96" width="7" height="17" fill="#3a3a3a"/>
<rect x="1615" y="96" width="17" height="17" fill="#404040"/>
<rect x="1632" y="96" width="34" height="17" fill="#424242"/>
<rect x="1666" y="96" width="17" height="17" fill="#303030"/>
<rect x="1683" y="96" width="17" height="17" fill="#202020"/>
<rect x="1700" y="96" width="17" height="17" fill="#3c3c3c"/>
<rect x="1717" y="96" width="17" height="17" fill="#3e3e3e"/>
<rect x="1734" y="96" width="17" height="17" fill="#404040"/>
<rect x="1751" y="96" width="17" height="17" fill="#464646"/>
<rect x="1768" y="96" width="17" height="17" fill="#383838"/>
<rect x="1785" y="96" width="17" height="17" fill="#242424"/>
<rect x="1802" y="96" width="17" height="17" fill="#1e1e1e"/>
<rect x="1819" y="96" width="17" height="17" fill="#303030"/>
<rect x="1836" y="96" width="17" height="17" fill="#202020"/>
<rect x="1853" y="96" width="17" height="17" fill="#1e1e1e"/>
<rect x="1870" y="96" width="17" height="17" fill="#242424"/>
<rect x="1887" y="96" width="16" height="17" fill="#282828"/>
<rect x="1608" y="113" width="24" height="17" fill="#444444"/>
<rect x="1632" y="113" width="34" height="17" fill="#4a4a4a"/>
<rect x="1666" y="113" width="17" height="17" fill="#3a3a3a"/>
<rect x="1683" y="113" width="17" height="17" fill="#202020"/>
<rect x="1700" y="113" width="17" height="17" fill="#383838"/>
<rect x="1717" y="113" width="17" height="17" fill="#3a3a3a"/>
<rect x="1734" y="113" width="17" height="17" fill="#3c3c3c"/>
<rect x="1751" y="113" width="17" height="17" fill="#4a4a4a"/>
<rect x="1768" y="113" width="17" height="17" fill="#787878"/>
<rect x="1785" y="113" width="17" height="17" fill="#646464"/>
<rect x="1802" y="113" width="17" height="17" fill="#202020"/>
<rect x="1819" y="113" width="17" height="17" fill="#323232"/>
<rect x="1836" y="113" width="34" height="17" fill="#202020"/>
<rect x="1870" y="113" width="17" height="17" fill="#242424"/>
<rect x="1887" y="113" width="16" height="17" fill="#2a2a2a"/>
<rect x="1608" y="130" width="7" height="17" fill="#5a5a5a"/>
<rect x="1615" y="130" width="34" height="17" fill="#505050"/>
<rect x="1649" y="130" width="17" height="17" fill="#525252"/>
<rect x="1666" y="130" width="17" height="17" fill="#464646"/>
<rect x="1683" y="130" width="17" height="17" fill="#202020"/>
<rect x="1700" y="130" width="17" height="17" fill="#242424"/>
<rect x="1717" y="130" width="17" height="17" fill="#343434"/>
<rect x="1734" y="130" width="17" height="17" fill="#585858"/>
<rect x="1751" y="130" width="17" height="17" fill="#808080"/>
<rect x="1768" y="130" width="17" height="17" fill="#6a6a6a"/>
<rect x="1785" y="130" width="17" height="17" fill="#404040"/>
<rect x="1802" y="130" width="17" height="17" fill="#202020"/>
<rect x="1819" y="130" width="17" height="17" fill="#303030"/>
<rect x="1836" y="130" width="17" height="17" fill="#282828"/>
<rect x="1853" y="130" width="17" height="17" fill="#1e1e1e"/>
<rect x="1870" y="130" width="17" height="17" fill="#202020"/>
<rect x="1887" y="130" width="16" height="17" fill="#303030"/>
<rect x="1608" y="147" width="7" height="17" fill="#787878"/>
<rect x="1615" y="147" width="17" height="17" fill="#5c5c5c"/>
<rect x="1632" y="147" width="34" height="17" fill="#585858"/>
<rect x="1666" y="147" width="17" height="17" fill="#525252"/>
<rect x="1683" y="147" width="17" height="17" fill="#222222"/>
<rect x="1700" y="147" width="34" height="17" fill="#242424"/>
<rect x="1734" y="147" width="17" height="17" fill="#222222"/>
<rect x="1751" y="147" width="17" height="17" fill="#363636"/>
<rect x="1768" y="147" width="17" height="17" fill="#3c3c3c"/>
<rect x="1785" y="147" width="17" height="17" fill="#363636"/>
<rect x="1802" y="147" width="17" height="17" fill="#303030"/>
<rect x="1819" y="147" width="17" height="17" fill="#323232"/>
<rect x="1836" y="147" width="17" height="17" fill="#383838"/>
<rect x="1853" y="147" width="17" height="17" fill="#282828"/>
<rect x="1870" y="147" width="17" height="17" fill="#202020"/>
<rect x="1887" y="147" width="16" height="17" fill="#3c3c3c"/>
<rect x="1608" y="164" width="7" height="17" fill="#808080"/>
<rect x="1615" y="164" width="17" height="17" fill="#747474"/>
<rect x="1632" y="164" width="17" height="17" fill="#6c6c6c"/>
<rect x="1649" y="164" width="17" height="17" fill="#666666"/>
<rect x="1666" y="164" width="17" height="17" fill="#6a6a6a"/>
<rect x="1683" y="164" width="17" height="17" fill="#343434"/>
<rect x="1700" y="164" width="51" height="17" fill="#1e1e1e"/>
<rect x="1751" y="164" width="17" height="17" fill="#262626"/>
<rect x="1768" y="164" width="34" height="17" fill="#343434"/>
<rect x="1802" y="164" width="17" height="17" fill="#2e2e2e"/>
<rect x="1819" y="164" width="17" height="17" fill="#303030"/>
<rect x="1836" y="164" width="17" height="17" fill="#383838"/>
<rect x="1853" y="164" width="17" height="17" fill="#303030"/>
<rect x="1870" y="164" width="17" height="17" fill="#202020"/>
<rect x="1887" y="164" width="16" height="17" fill="#303030"/>
<rect x="1608" y="181" width="7" height="17" fill="#888888"/>
<rect x="1615" y="181" width="17" height="17" fill="#7c7c7c"/>
<rect x="1632" y="181" width="17" height="17" fill="#7e7e7e"/>
<rect x="1649" y="181" width="17" height="17" fill="#707070"/>
<rect x="1666" y="181" width="17" height="17" fill="#5e5e5e"/>
<rect x="1683" y="181" width="17" height="17" fill="#323232"/>
<rect x="1700" y="181" width="102" height="17" fill="#1e1e1e"/>
<rect x="1802" y="181" width="17" height="17" fill="#222222"/>
<rect x="1819" y="181" width="17" height="17" fill="#282828"/>
<rect x="1836" y="181" width="17" height="17" fill="#343434"/>
<rect x="1853" y="181" width="17" height="17" fill="#2a2a2a"/>
<rect x="1870" y="181" width="33" height="17" fill="#202020"/>
<rect x="1608" y="198" width="7" height="17" fill="#909090"/>
<rect x="1615" y="198" width="17" height="17" fill="#808080"/>
<rect x="1632" y="198" width="17" height="17" fill="#6a6a6a"/>
<rect x="1649" y="198" width="17" height="17" fill="#303030"/>
<rect x="1666" y="198" width="17" height="17" fill="#202020"/>
<rect x="1683" y="198" width="17" height="17" fill="#1e1e1e"/>
<rect x="1700" y="198" width="17" height="17" fill="#202020"/>
<rect x="1717" y="198" width="17" height="17" fill="#3e3e3e"/>
<rect x="1734" y="198" width="17" height="17" fill="#404040"/>
<rect x="1751" y="198" width="17" height="17" fill="#303030"/>
<rect x="1768" y="198" width="135" height="17" fill="#1e1e1e"/>
<rect x="1608" y="215" width="7" height="17" fill="#848484"/>
<rect x="1615" y="215" width="17" height="17" fill="#808080"/>
<rect x="1632" y="215" width="17" height="17" fill="#7c7c7c"/>
<rect x="1649" y="215" width="17" height="17" fill="#303030"/>
<rect x="1666" y="215" width="34" height="17" fill="#1c1c1c"/>
<rect x="1700" y="215" width="17" height="17" fill="#1e1e1e"/>
<rect x="1717" y="215" width="34" height="17" fill="#626262"/>
<rect x="1751" y="215" width="17" height="17" fill="#565656"/>
<rect x="1768" y="215" width="17" height="17" fill="#202020"/>
<rect x="1785" y="215" width="17" height="17" fill="#1e1e1e"/>
<rect x="1802" y="215" width="17" height="17" fill="#303030"/>
<rect x="1819" y="215" width="17" height="17" fill="#323232"/>
<rect x="1836" y="215" width="17" height="17" fill="#202020"/>
<rect x="1853" y="215" width="50" height="17" fill="#1c1c1c"/>
<rect x="1608" y="232" width="7" height="17" fill="#828282"/>
<rect x="1615" y="232" width="17" height="17" fill="#808080"/>
<rect x="1632" y="232" width="17" height="17" fill="#868686"/>
<rect x="1649" y="232" width="17" height="17" fill="#808080"/>
<rect x="1666" y="232" width="17" height="17" fill="#2e2e2e"/>
<rect x="1683" y="232" width="17" height="17" fill="#242424"/>
<rect x="1700" y="232" width="17" height="17" fill="#646464"/>
<rect x="1717" y="232" width="17" height="17" fill="#808080"/>
<rect x="1734" y="232" width="17" height="17" fill="#7c7c7c"/>
<rect x="1751" y="232" width="17" height="17" fill="#666666"/>
<rect x="1768" y="232" width="17" height="17" fill="#222222"/>
<rect x="1785" y="232" width="17" height="17" fill="#1e1e1e"/>
<rect x="1802" y="232" width="17" height="17" fill="#262626"/>
<rect x="1819" y="232" width="17" height="17" fill="#2a2a2a"/>
<rect x="1836" y="232" width="17" height="17" fill="#202020"/>
<rect x="1853" y="232" width="50" height="17" fill="#1c1c1c"/>
<rect x="1608" y="249" width="7" height="17" fill="#808080"/>
<rect x="1615" y="249" width="34" height="17" fill="#828282"/>
<rect x="1649" y="249" width="17" height="17" fill="#808080"/>
<rect x="1666" y="249" width="34" height="17" fill="#7c7c7c"/>
<rect x="1700" y="249" width="34" height="17" fill="#888888"/>
<rect x="1734" y="249" width="17" height="17" fill="#868686"/>
<rect x="1751" y="249" width="17" height="17" fill="#707070"/>
<rect x="1768" y="249" width="17" height="17" fill="#242424"/>
<rect x="1785" y="249" width="102" height="17" fill="#1c1c1c"/>
<rect x="1887" y="249" width="16" height="17" fill="#222222"/>
<rect x="1608" y="266" width="7" height="17" fill="#7e7e7e"/>
<rect x="1615" y="266" width="68" height="17" fill="#808080"/>
<rect x="1683" y="266" width="17" height="17" fill="#7c7c7c"/>
<rect x="1700" y="266" width="17" height="17" fill="#828282"/>
<rect x="1717" y="266" width="17" height="17" fill="#848484"/>
<rect x="1734" y="266" width="17" height="17" fill="#828282"/>
<rect x="1751" y="266" width="17" height="17" fill="#808080"/>
<rect x="1768" y="266" width="17" height="17" fill="#545454"/>
<rect x="1785" y="266" width="17" height="17" fill="#383838"/>
<rect x="1802" y="266" width="17" height="17" fill="#464646"/>
<rect x="1819" y="266" width="17" height="17" fill="#4a4a4a"/>
<rect x="1836" y="266" width="17" height="17" fill="#606060"/>
<rect x="1853" y="266" width="17" height="17" fill="#5e5e5e"/>
<rect x="1870" y="266" width="17" height="17" fill="#7e7e7e"/>
<rect x="1887" y="266" width="16" height="17" fill="#707070"/>
<rect x="1608" y="283" width="7" height="17" fill="#626262"/>
<rect x="1615" y="283" width="34" height="17" fill="#787878"/>
<rect x="1649" y="283" width="17" height="17" fill="#7e7e7e"/>
<rect x="1666" y="283" width="34" height="17" fill="#7c7c7c"/>
<rect x="1700" y="283" width="17" height="17" fill="#7e7e7e"/>
<rect x="1717" y="283" width="17" height="17" fill="#808080"/>
<rect x="1734" y="283" width="34" height="17" fill="#888888"/>
<rect x="1768" y="283" width="34" height="17" fill="#7c7c7c"/>
<rect x="1802" y="283" width="17" height="17" fill="#6a6a6a"/>
<rect x="1819" y="283" width="17" height="17" fill="#848484"/>
<rect x="1836" y="283" width="17" height="17" fill="#6a6a6a"/>
<rect x="1853" y="283" width="17" height="17" fill="#6c6c6c"/>
<rect x="1870" y="283" width="17" height="17" fill="#7c7c7c"/>
<rect x="1887" y="283" width="16" height="17" fill="#848484"/>
<rect x="1608" y="300" width="7" height="17" fill="#5a5a5a"/>
<rect x="1615" y="300" width="17" height="17" fill="#505050"/>
<rect x="1632" y="300" width="17" height="17" fill="#4a4a4a"/>
<rect x="1649" y="300" width="34" height="17" fill="#444444"/>
<rect x="1683" y="300" width="17" height="17" fill="#4c4c4c"/>
<rect x="1700" y="300" width="17" height="17" fill="#525252"/>
<rect x="1717" y="300" width="17" height="17" fill="#646464"/>
<rect x="1734" y="300" width="17" height="17" fill="#787878"/>
<rect x="1751" y="300" width="17" height="17" fill="#808080"/>
<rect x="1768" y="300" width="17" height="17" fill="#868686"/>
<rect x="1785" y="300" width="17" height="17" fill="#848484"/>
<rect x="1802" y="300" width="17" height="17" fill="#808080"/>
<rect x="1819" y="300" width="17" height="17" fill="#848484"/>
<rect x="1836" y="300" width="17" height="17" fill="#7c7c7c"/>
<rect x="1853" y="300" width="50" height="17" fill="#848484"/>
<rect x="1608" y="317" width="7" height="17" fill="#a0a0a0"/>
<rect x="1615" y="317" width="17" height="17" fill="#8c8c8c"/>
<rect x="1632" y="317" width="17" height="17" fill="#7e7e7e"/>
<rect x="1649" y="317" width="17" height="17" fill="#707070"/>
<rect x="1666" y="317" width="17" height="17" fill="#6c6c6c"/>
<rect x="1683" y="317" width="17" height="17" fill="#5e5e5e"/>
<rect x="1700" y="317" width="17" height="17" fill="#4a4a4a"/>
<rect x="1717" y="317" width="17" height="17" fill="#3c3c3c"/>
<rect x="1734" y="317" width="17" height="17" fill="#383838"/>
<rect x="1751" y="317" width="17" height="17" fill="#404040"/>
<rect x="1768" y="317" width="17" height="17" fill="#7c7c7c"/>
<rect x="1785" y="317" width="17" height="17" fill="#8c8c8c"/>
<rect x="1802" y="317" width="17" height="17" fill="#848484"/>
<rect x="1819" y="317" width="17" height="17" fill="#7c7c7c"/>
<rect x="1836" y="317" width="17" height="17" fill="#787878"/>
<rect x="1853" y="317" width="50" height="17" fill="#808080"/>
<rect x="1608" y="334" width="7" height="17" fill="#8c8c8c"/>
<rect x="1615" y="334" width="17" height="17" fill="#a0a0a0"/>
<rect x="1632" y="334" width="17" height="17" fill="#a2a2a2"/>
<rect x="1649" y="334" width="17" height="17" fill="#989898"/>
<rect x="1666" y="334" width="17" height="17" fill="#888888"/>
<rect x="1683" y="334" width="17" height="17" fill="#7c7c7c"/>
<rect x="1700" y="334" width="17" height="17" fill="#727272"/>
<rect x="1717" y="334" width="17" height="17" fill="#707070"/>
<rect x="1734" y="334" width="17" height="17" fill="#686868"/>
<rect x="1751" y="334" width="17" height="17" fill="#6a6a6a"/>
<rect x="1768" y="334" width="51" height="17" fill="#808080"/>
<rect x="1819" y="334" width="34" height="17" fill="#888888"/>
<rect x="1853" y="334" width="17" height="17" fill="#808080"/>
<rect x="1870" y="334" width="17" height="17" fill="#686868"/>
<rect x="1887" y="334" width="16" height="17" fill="#848484"/>
<rect x="1608" y="351" width="7" height="17" fill="#464646"/>
<rect x="1615" y="351" width="17" height="17" fill="#545454"/>
<rect x="1632" y="351" width="17" height="17" fill="#666666"/>
<rect x="1649" y="351" width="17" height="17" fill="#6a6a6a"/>
<rect x="1666" y="351" width="34" height="17" fill="#707070"/>
<rect x="1700" y="351" width="17" height="17" fill="#646464"/>
<rect x="1717" y="351" width="17" height="17" fill="#626262"/>
<rect x="1734" y="351" width="17" height="17" fill="#686868"/>
<rect x="1751" y="351" width="17" height="17" fill="#707070"/>
<rect x="1768" y="351" width="17" height="17" fill="#727272"/>
<rect x="1785" y="351" width="17" height="17" fill="#787878"/>
<rect x="1802" y="351" width="17" height="17" fill="#7c7c7c"/>
<rect x="1819" y="351" width="34" height="17" fill="#808080"/>
<rect x="1853" y="351" width="50" height="17" fill="#868686"/>
<rect x="1608" y="368" width="7" height="17" fill="#343434"/>
<rect x="1615" y="368" width="17" height="17" fill="#363636"/>
<rect x="1632" y="368" width="17" height="17" fill="#383838"/>
<rect x="1649" y="368" width="17" height="17" fill="#3c3c3c"/>
<rect x="1666" y="368" width="17" height="17" fill="#404040"/>
<rect x="1683" y="368" width="17" height="17" fill="#444444"/>
<rect x="1700" y="368" width="17" height="17" fill="#4a4a4a"/>
<rect x="1717" y="368" width="17" height="17" fill="#4e4e4e"/>
<rect x="1734" y="368" width="17" height="17" fill="#525252"/>
<rect x="1751" y="368" width="17" height="17" fill="#606060"/>
<rect x="1768" y="368" width="17" height="17" fill="#707070"/>
<rect x="1785" y="368" width="34" height="17" fill="#787878"/>
<rect x="1819" y="368" width="34" height="17" fill="#7c7c7c"/>
<rect x="1853" y="368" width="17" height="17" fill="#7e7e7e"/>
<rect x="1870" y="368" width="17" height="17" fill="#828282"/>
<rect x="1887" y="368" width="16" height="17" fill="#888888"/>
<rect x="1608" y="385" width="7" height="17" fill="#262626"/>
<rect x="1615" y="385" width="119" height="17" fill="#303030"/>
<rect x="1734" y="385" width="17" height="17" fill="#323232"/>
<rect x="1751" y="385" width="17" height="17" fill="#343434"/>
<rect x="1768" y="385" width="17" height="17" fill="#3a3a3a"/>
<rect x="1785" y="385" width="17" height="17" fill="#444444"/>
<rect x="1802" y="385" width="17" height="17" fill="#545454"/>
<rect x="1819" y="385" width="17" height="17" fill="#606060"/>
<rect x="1836" y="385" width="17" height="17" fill="#686868"/>
<rect x="1853" y="385" width="17" height="17" fill="#707070"/>
<rect x="1870" y="385" width="17" height="17" fill="#7e7e7e"/>
<rect x="1887" y="385" width="16" height="17" fill="#848484"/>
<rect x="1608" y="402" width="7" height="17" fill="#5a5a5a"/>
<rect x="1615" y="402" width="17" height="17" fill="#4a4a4a"/>
<rect x="1632" y="402" width="17" height="17" fill="#3c3c3c"/>
<rect x="1649" y="402" width="17" height="17" fill="#363636"/>
<rect x="1666" y="402" width="17" height="17" fill="#303030"/>
<rect x="1683" y="402" width="17" height="17" fill="#282828"/>
<rect x="1700" y="402" width="17" height="17" fill="#222222"/>
<rect x="1717" y="402" width="17" height="17" fill="#2c2c2c"/>
<rect x="1734" y="402" width="34" height="17" fill="#343434"/>
<rect x="1768" y="402" width="17" height="17" fill="#2e2e2e"/>
<rect x="1785" y="402" width="17" height="17" fill="#323232"/>
<rect x="1802" y="402" width="17" height="17" fill="#343434"/>
<rect x="1819" y="402" width="17" height="17" fill="#3a3a3a"/>
<rect x="1836" y="402" width="17" height="17" fill="#3e3e3e"/>
<rect x="1853" y="402" width="17" height="17" fill="#3c3c3c"/>
<rect x="1870" y="402" width="17" height="17" fill="#404040"/>
<rect x="1887" y="402" width="16" height="17" fill="#4a4a4a"/>
<rect x="1608" y="419" width="7" height="17" fill="#7c7c7c"/>
<rect x="1615" y="419" width="34" height="17" fill="#727272"/>
<rect x="1649" y="419" width="17" height="17" fill="#707070"/>
<rect x="1666" y="419" width="17" height="17" fill="#686868"/>
<rect x="1683" y="419" width="17" height="17" fill="#606060"/>
<rect x="1700" y="419" width="17" height="17" fill="#585858"/>
<rect x="1717" y="419" width="17" height="17" fill="#4a4a4a"/>
<rect x="1734" y="419" width="17" height="17" fill="#404040"/>
<rect x="1751" y="419" width="17" height="17" fill="#343434"/>
<rect x="1768" y="419" width="17" height="17" fill="#2c2c2c"/>
<rect x="1785" y="419" width="17" height="17" fill="#2a2a2a"/>
<rect x="1802" y="419" width="34" height="17" fill="#282828"/>
<rect x="1836" y="419" width="17" height="17" fill="#2a2a2a"/>
<rect x="1853" y="419" width="34" height="17" fill="#323232"/>
<rect x="1887" y="419" width="16" height="17" fill="#343434"/>
<rect x="1608" y="436" width="7" height="17" fill="#848484"/>
<rect x="1615" y="436" width="17" height="17" fill="#828282"/>
<rect x="1632" y="436" width="17" height="17" fill="#808080"/>
<rect x="1649" y="436" width="17" height="17" fill="#7e7e7e"/>
<rect x="1666" y="436" width="17" height="17" fill="#7c7c7c"/>
<rect x="1683" y="436" width="17" height="17" fill="#7a7a7a"/>
<rect x="1700" y="436" width="17" height="17" fill="#787878"/>
<rect x="1717" y="436" width="17" height="17" fill="#727272"/>
<rect x="1734" y="436" width="17" height="17" fill="#707070"/>
<rect x="1751" y="436" width="17" height="17" fill="#6c6c6c"/>
<rect x="1768" y="436" width="17" height="17" fill="#666666"/>
<rect x="1785" y="436" width="17" height="17" fill="#606060"/>
<rect x="1802" y="436" width="17" height="17" fill="#565656"/>
<rect x="1819" y="436" width="17" height="17" fill="#484848"/>
<rect x="1836" y="436" width="17" height="17" fill="#3a3a3a"/>
<rect x="1853" y="436" width="17" height="17" fill="#2e2e2e"/>
<rect x="1870" y="436" width="17" height="17" fill="#282828"/>
<rect x="1887" y="436" width="16" height="17" fill="#242424"/>
<rect x="1608" y="453" width="41" height="17" fill="#868686"/>
<rect x="1649" y="453" width="51" height="17" fill="#848484"/>
<rect x="1700" y="453" width="34" height="17" fill="#828282"/>
<rect x="1734" y="453" width="34" height="17" fill="#808080"/>
<rect x="1768" y="453" width="17" height="17" fill="#7e7e7e"/>
<rect x="1785" y="453" width="17" height="17" fill="#7a7a7a"/>
<rect x="1802" y="453" width="34" height="17" fill="#787878"/>
<rect x="1836" y="453" width="17" height="17" fill="#707070"/>
<rect x="1853" y="453" width="17" height="17" fill="#6c6c6c"/>
<rect x="1870" y="453" width="17" height="17" fill="#606060"/>
<rect x="1887" y="453" width="16" height="17" fill="#545454"/>
<rect x="1608" y="470" width="262" height="17" fill="#868686"/>
<rect x="1870" y="470" width="17" height="17" fill="#808080"/>
<rect x="1887" y="470" width="16" height="17" fill="#787878"/>
<rect x="1608" y="487" width="295" height="17" fill="#868686"/>
<rect x="1608" y="504" width="295" height="17" fill="#848484"/>
<rect x="1608" y="521" width="295" height="17" fill="#828282"/>
<rect x="1608" y="538" width="295" height="17" fill="#808080"/>
<rect x="1608" y="555" width="295" height="17" fill="#7c7c7c"/>
<rect x="1608" y="572" width="295" height="17" fill="#787878"/>
<rect x="1608" y="589" width="295" height="17" fill="#727272"/>
<rect x="1608" y="606" width="295" height="17" fill="#6c6c6c"/>
<rect x="1608" y="623" width="295" height="17" fill="#666666"/>
<rect x="1608" y="640" width="295" height="17" fill="#606060"/>
<rect x="1608" y="657" width="295" height="17" fill="#5a5a5a"/>
<rect x="1608" y="674" width="295" height="17" fill="#565656"/>
<rect x="1608" y="691" width="295" height="17" fill="#525252"/>
<rect x="1608" y="708" width="295" height="17" fill="#4c4c4c"/>
<rect x="1608" y="725" width="295" height="17" fill="#484848"/>
<rect x="1608" y="742" width="295" height="15" fill="#444444"/>
</svg>
<!-- right lower faded area + scrollbar -->
<div class="a" style="left:1608px;top:757px;width:295px;height:283px;background:#dcdcdc"></div>
<div class="a" style="left:1785px;top:1029px;width:51px;height:11px;background:#d2d2d2"></div>
<div class="a" style="left:1836px;top:1029px;width:34px;height:11px;background:#c2c2c2"></div>
<div class="a" style="left:1870px;top:1029px;width:17px;height:11px;background:#d4d4d4"></div>
<div class="a" style="left:1903px;top:63px;width:17px;height:977px;background:#f1f1f1"></div>
<svg class="a" style="left:1907px;top:70px" width="9" height="6" viewBox="0 0 9 6"><path d="M0 5.500L4.500 .5 9 5.500z" fill="#505050"/></svg>
<svg class="a" style="left:1907px;top:1029px" width="9" height="6" viewBox="0 0 9 6"><path d="M0 .5L4.500 5.500 9 .5z" fill="#505050"/></svg>
<!-- forum column -->
<div id="col" class="a" style="left:296px;top:63px;width:1312px;height:977px;background:#ececec"></div>
<div class="a" style="left:296px;top:63px;width:1312px;height:31px;background:linear-gradient(#121212,#1d1d1d 60%,#1f1f1f)"></div>
<div class="a" style="left:296px;top:94px;width:1312px;height:25px;background:#323232"></div>
<div class="a" style="left:296px;top:119px;width:1312px;height:25px;background:linear-gradient(#292929,#1c1c1c)"></div>
<div class="a" style="left:296px;top:144px;width:1312px;height:1px;background:#b5b5b5"></div>
<!-- header user -->
<svg class="a" style="left:1444px;top:69px" width="20" height="20" viewBox="0 0 96 96"><use href="#car"/></svg>
<span id="mk" class="a" style="left:1470px;top:70.800px;font-size:14px;font-weight:700;color:#d6d6d6">makeevb</span>
<svg class="a" style="left:1545px;top:72px" width="17" height="13" viewBox="0 0 17 13"><path d="M0 1.500A1.500 1.500 0 0 1 1.500 0h14A1.500 1.500 0 0 1 17 1.500v.7L8.500 8 0 2.200zM0 4l8.500 5.800L17 4v7.500a1.500 1.500 0 0 1-1.500 1.500h-14A1.500 1.500 0 0 1 0 11.500z" fill="#cfcfcf"/></svg>
<svg class="a" style="left:1581px;top:70px" width="18" height="15" viewBox="0 0 18 15"><rect x="1" y="0" width="1.800" height="15" fill="#cfcfcf"/><path d="M3.500 2.200c2.500-1.500 4.500-1 6.500 0s4.500 1 7-.6v8c-2.500 1.600-5 1.200-7 .2s-4-1.200-6.500.4z" fill="#cfcfcf"/></svg>
<!-- nav -->
<span id="n1" class="a" style="left:307.500px;top:98px;font-size:15.500px;font-weight:700;color:#fff">Форум</span>
<span id="n2" class="a" style="left:380.600px;top:97.500px;font-size:16px;color:#cfcfcf">Ресурсы</span>
<span id="n3" class="a" style="left:468.400px;top:97.500px;font-size:16px;color:#cfcfcf">Пользователи</span>
<span id="n4" class="a" style="left:599px;top:97.500px;font-size:16px;color:#cfcfcf">Наш канал YouTube</span>
<span id="n5" class="a" style="left:765.700px;top:97.500px;font-size:16px;color:#cfcfcf">Switch to English</span>
<span id="s1" class="a" style="left:314.500px;top:123.300px;font-size:15px;color:#a3a3a3">Отметить разделы прочитанными</span>
<span id="s2" class="a" style="left:569.300px;top:123.300px;font-size:15px;color:#a3a3a3">Поиск сообщений</span>
<span id="s3" class="a" style="left:712px;top:123.300px;font-size:15px;color:#a3a3a3">Отслеживаемые разделы</span>
<span id="s4" class="a" style="left:911px;top:123.300px;font-size:15px;color:#a3a3a3">Отслеживаемые темы</span>
<span id="s5" class="a" style="left:1086px;top:123.300px;font-size:15px;color:#a3a3a3">Новые сообщения</span>
<!-- post panels -->
<div class="a" style="left:296px;top:145px;width:2px;height:895px;background:#dadada"></div>
<div class="a" style="left:298px;top:145px;width:1044px;height:14px;background:#fbfbfb;border-right:1px solid #d6d6d6"></div>
<div class="a" style="left:298px;top:159px;width:1045px;height:499px;background:#f5f5f5;border-top:1px solid #dedede;border-bottom:1px solid #d6d6d6;border-right:1px solid #d4d4d4"></div>
<!-- avatar 1 -->
<div class="a" style="left:345px;top:285.500px;width:114px;height:14px;background:radial-gradient(ellipse at center,rgba(0,0,0,.55) 0,rgba(0,0,0,.25) 35%,rgba(0,0,0,0) 68%)"></div>
<div class="a" style="left:352px;top:184px;width:100px;height:100px;background:#fff;border:1px solid #e2e2e2;box-shadow:0 1px 2px rgba(0,0,0,.12)"></div>
<svg class="a" style="left:352px;top:184px" width="100" height="100" viewBox="0 0 100 100">
<path d="M49.800 6.900C56 6.500 62 11 62 20C62 26 60.500 30.500 58.800 33.200L61 32.700 65 32.500C68 34 71 36.500 74 37.500L79.200 38.600 83 40.200 83 59.300 78 56.500C75 60 73 62 72.600 66.700C72.800 72 74 77 77.500 87.500L78.800 95.400 24.500 95.400C21 90 18 86 16.600 82.500C18 78 20 73 20.700 70C21 66 21.500 62 22 58.500C23 54 24 50 24.500 46.400L30 43.500 36 40 41.500 36.500C41 34 40.500 31 40.500 29C39.500 25 39.800 20 40 16C41 10 45 7 49.800 6.900Z" fill="#0d0d0d"/>
<path d="M42.700 37L47 39.500 53.500 38.800 58.600 44 58.600 78.400C53 70 49.500 61 47.200 52C46 46 44.500 41 42.700 37Z" fill="#fff"/>
<path d="M46.600 40.800L50.600 43.300 54.600 41.300 54.400 47 50.600 45.200 47.400 47.600Z" fill="#0d0d0d"/>
<path d="M54 36.200L58.900 43.600 64.500 38.800" fill="none" stroke="#fff" stroke-width=".9"/>
<path d="M58.900 43.600V54.800" stroke="#e8e8e8" stroke-width="1.100"/>
<path d="M57.300 55.200h6.800" stroke="#f2f2f2" stroke-width="1.300"/>
<path d="M32.300 75.900L30.700 85.800 33 89 35.700 91.600 35 86 34.400 82.500Z" fill="#fff"/>
<path d="M77.100 39.400L80 40.200 79.200 48.500 74.500 47.500 76 44Z" fill="#fff"/>
<circle cx="77.300" cy="46.300" r=".7" fill="#111"/>
</svg>
<span id="u1" class="a" style="left:318px;top:306.900px;font-size:18.500px;font-weight:700;color:#0f4a8c">Алексей</span>
<span id="u2" class="a" style="left:318px;top:326.200px;font-size:12.500px;color:#2a2a2a">Начинающий</span>
<span class="a lb" style="left:318px;top:354px">Регистрация:</span>
<span class="a lb" style="left:318px;top:374px">Сообщения:</span>
<span class="a lb" style="left:318px;top:394px">Симпатии:</span>
<span class="a lb" style="left:318px;top:414px">Рейтинг:</span>
<span class="a lb" style="left:318px;top:434px">Видеорегистратор:</span>
<span class="a lb" style="left:318px;top:472px">Авто:</span>
<span class="a lb" style="left:318px;top:492px">Регион:</span>
<span class="a vl" style="top:356px">15 окт 2014</span>
<span class="a vl" style="top:376px">70</span>
<span class="a vl" style="top:396px">5</span>
<span class="a vl" style="top:415px"><span style="color:#5a9a2a">+36</span> / 0 / <span style="color:#d22">-0</span></span>
<span id="v5" class="a vl" style="top:452px;font-size:12px">в активном поиске</span>
<span id="v6" class="a vl" style="top:473px;font-size:11.500px">ford focus 3 sedan</span>
<span class="a vl" style="top:492px;font-size:12.500px">СПб/Лен.обл</span>
<!-- quote -->
<div class="a" style="left:528px;top:184px;width:746px;height:83px;background:#f9f9f9;border:1px solid #dedede;border-radius:2px"></div>
<div class="a" style="left:529px;top:185px;width:744px;height:38px;background:#f1f1f1;border-bottom:1px solid #dcdcdc"></div>
<span id="q1" class="a" style="left:538px;top:197px;font-size:12.500px;color:#3c5f8c">makeevb сказал(а): ↑</span>
<span id="q2" class="a" style="left:539px;top:237px;font-size:15px;font-weight:700;font-style:italic;color:#141414">a7ibub</span>
<span id="m1" class="a" style="left:512px;top:270.600px;font-size:14.500px;color:#141414">А как понять из обозначения что эту надо выбирать?</span>
<span id="m2" class="a" style="left:512.300px;top:337.400px;font-size:13px;color:#9a9a9a">Алексей, только что</span>
<div class="a" style="left:512px;top:370px;width:122px;height:25px;background:#fff;border:1px solid #dcdcdc;border-radius:2px"></div>
<svg class="a" style="left:521px;top:376px" width="12" height="12" viewBox="0 0 12 12"><circle cx="6" cy="6" r="5.500" fill="#3c3c3c"/><rect x="5.100" y="2.300" width="1.800" height="4.800" fill="#fff"/><rect x="5.100" y="8" width="1.800" height="1.700" fill="#fff"/></svg>
<span id="rp" class="a" style="left:537.400px;top:374.700px;font-size:13px;color:#5a5a5a">Пожаловаться</span>
<!-- new badge -->
<svg class="a" style="left:1338px;top:169px" width="10" height="7" viewBox="0 0 10 7"><path d="M0 0l9 5.500V7H0z" fill="#5a5a5a"/></svg>
<div class="a" style="left:1290px;top:174px;width:57px;height:23px;background:#6aa75c;border-radius:2px"></div>
<span id="nw" class="a" style="left:1296px;top:178px;font-size:14px;font-weight:700;color:#fff">Новое</span>
<!-- ad -->
<div class="a" style="left:760px;top:439px;width:140px;height:200px;background:#fff;border:1px solid #111"></div>
<div class="a" style="left:761px;top:575px;width:139px;height:56px;background:#fdb614"></div>
<svg class="a" style="left:761px;top:440px" width="139" height="135" viewBox="0 0 139 135">
<defs><radialGradient id="ln" cx=".5" cy=".5" r=".5"><stop offset="0" stop-color="#0a0a0a"/><stop offset=".42" stop-color="#0c0c0c"/><stop offset=".5" stop-color="#2e2e2e"/><stop offset=".58" stop-color="#161616"/><stop offset=".7" stop-color="#262626"/><stop offset=".8" stop-color="#121212"/><stop offset=".92" stop-color="#2a2a2a"/><stop offset="1" stop-color="#1a1a1a"/></radialGradient>
<linearGradient id="cb" x1="0" x2="0" y1="0" y2="1"><stop offset="0" stop-color="#2a2a2a"/><stop offset=".3" stop-color="#1c1c1c"/><stop offset="1" stop-color="#141414"/></linearGradient>
<filter id="b3"><feGaussianBlur stdDeviation=".6"/></filter></defs>
<g filter="url(#b3)">
<path d="M40 47.500h99v69.500H40q-8-3-8-34.500t8-35z" fill="url(#cb)"/>
<ellipse cx="85" cy="86" rx="30" ry="26" fill="#101010"/>
<circle cx="84" cy="71" r="33.500" fill="url(#ln)"/>
<circle cx="83" cy="68.500" r="16.500" fill="#070707"/>
<circle cx="83.500" cy="69.500" r="2.200" fill="#c8c0b8"/><circle cx="83.500" cy="69.500" r="1" fill="#6a5a50"/>
</g>
</svg>
<span class="a" style="left:804px;top:563px;font-size:11.500px;font-weight:700;color:#fff;letter-spacing:-0.400px;text-shadow:0 0 1.500px #222,0 0 1.500px #222,0 0 1.500px #222,0 0 2px #222">Street</span>
<span class="a" style="left:857px;top:563px;font-size:11.500px;font-weight:700;color:#fff;letter-spacing:-0.400px;text-shadow:0 0 1.500px #222,0 0 1.500px #222,0 0 1.500px #222,0 0 2px #222">Storm</span>
<svg class="a" style="left:830px;top:552px" width="29" height="34" viewBox="0 0 29 34"><path d="M14.500 1.500L27.500 17 14.500 32.500 1.500 17z" fill="#f7a028" stroke="#fff" stroke-width="2" stroke-linejoin="round"/><path d="M14.500 2.500L26.500 17 14.500 31.500 2.500 17z" fill="none" stroke="#3a3a3a" stroke-width=".7"/><path d="M17.500 8l-6.500 9.500h3.500l-3 8.500 7.500-11h-3.800z" fill="#1e1e1e"/></svg>
<span class="a" style="left:795.500px;top:587px;font-size:34.500px;color:#fff;-webkit-text-stroke:1.100px #fff">CVR-A</span>
<!-- pagination -->
<span id="pg" class="a" style="left:311.400px;top:681px;font-size:14px;color:#2a2a2a">Страница 163 из 163</span>
<div class="pb" style="left:445px;width:58px"></div><span id="pb0" class="a pt" style="left:450px">‹ Назад</span>
<div class="pb" style="left:507px;width:24px"></div><span class="a pt" style="left:516px;font-size:11px;top:683px">1</span>
<span class="a" style="left:538px;top:679px;font-size:15px;color:#8a8a8a">←</span>
<div class="pb" style="left:561px;width:24px"></div><span class="a pt pn" style="left:563px">158</span>
<div class="pb" style="left:588px;width:24px"></div><span class="a pt pn" style="left:590px">159</span>
<div class="pb" style="left:615px;width:24px"></div><span class="a pt pn" style="left:617px">160</span>
<div class="pb" style="left:642px;width:24px"></div><span class="a pt pn" style="left:644px">161</span>
<div class="pb" style="left:669px;width:24px"></div><span class="a pt pn" style="left:671px">162</span>
<div class="pb" style="left:706px;width:24px;background:#66a558"></div><span class="a pt pn" style="left:708px;color:#fff">163</span>
<div class="pb" style="left:736px;width:180px"></div><span id="pb9" class="a pt" style="left:741.800px">К первому непрочитанному</span>
<!-- reply box -->
<div class="a" style="left:311px;top:719px;width:1031px;height:203px;background:#f6f6f6;border:1px solid #e6e6e6"></div>
<div class="a" style="left:359px;top:846px;width:114px;height:14px;background:radial-gradient(ellipse at center,rgba(0,0,0,.5) 0,rgba(0,0,0,.22) 35%,rgba(0,0,0,0) 68%)"></div>
<div class="a" style="left:366px;top:744px;width:100px;height:100px;background:#fff;border:1px solid #dedede;box-shadow:0 1px 2px rgba(0,0,0,.15)"></div>
<svg id="car" class="a" style="left:368px;top:746px" width="96" height="96" viewBox="0 0 96 96">
<defs><filter id="bl" x="-5%" y="-5%" width="110%" height="110%"><feGaussianBlur stdDeviation="1.100"/></filter><filter id="bl2"><feGaussianBlur stdDeviation=".5"/></filter>
<linearGradient id="sky" x1="0" x2="1" y1="0" y2="0"><stop offset="0" stop-color="#dcd7cb"/><stop offset=".18" stop-color="#efeadf"/><stop offset=".42" stop-color="#ffffff"/><stop offset=".6" stop-color="#f1ecdc"/><stop offset="1" stop-color="#c9ba9a"/></linearGradient>
<linearGradient id="road" x1="0" x2="0" y1="0" y2="1"><stop offset="0" stop-color="#7d8173"/><stop offset=".2" stop-color="#4a5046"/><stop offset=".6" stop-color="#363d35"/><stop offset="1" stop-color="#2c332d"/></linearGradient>
<linearGradient id="body" x1="0" x2="0" y1="0" y2="1"><stop offset="0" stop-color="#d9dbdc"/><stop offset=".5" stop-color="#bfc1c3"/><stop offset="1" stop-color="#8f9294"/></linearGradient>
<linearGradient id="ws" x1="0" x2="0" y1="0" y2="1"><stop offset="0" stop-color="#7c858d"/><stop offset=".5" stop-color="#4a525a"/><stop offset="1" stop-color="#30363c"/></linearGradient></defs>
<rect width="96" height="96" fill="url(#sky)"/>
<g filter="url(#bl)">
<rect x="4" y="2" width="22" height="34" fill="#e1dbcd"/><rect x="0" y="8" width="5" height="28" fill="#b4b7b4"/>
<rect x="24" y="0" width="10" height="34" fill="#ece7dc"/>
<rect x="52" y="14" width="18" height="22" fill="#e0d2b2"/>
<rect x="68" y="0" width="28" height="42" fill="#c2b08e"/><rect x="69" y="1" width="12" height="11" fill="#aab0a8"/><rect x="81" y="0" width="15" height="6" fill="#3a2c22"/>
<rect x="84" y="22" width="12" height="22" fill="#a59477"/>
<ellipse cx="80" cy="26" rx="8" ry="14" fill="#5d5b3a"/><rect x="79" y="30" width="2.500" height="12" fill="#4a4630"/><ellipse cx="66" cy="30" rx="5" ry="6" fill="#8a8457"/>
<rect x="0" y="28" width="18" height="8" fill="#e3bd35"/><rect x="5" y="30" width="4" height="6" fill="#a07a3a"/>
<rect x="0" y="37" width="96" height="59" fill="url(#road)"/>
<path d="M70 44h26v16l-26-8z" fill="#6d6c5c" opacity=".7"/>
<path d="M5.500 70l5.500-.5L19 96H9z" fill="#e9ebe6"/><path d="M0 52l2 0 2 8H0z" fill="#cfd2cc"/>
<ellipse cx="54" cy="74" rx="33" ry="6.500" fill="#141814"/>
</g>
<g filter="url(#bl2)">
<path d="M12.500 44c1-6 5-12 10-17 3-1.500 28-2 44-.5 4 3 8 9 11 14 5 2 7.500 6 7.500 11v14c0 3-2 5-5 5.500H30c-4 0-8-1-10-3l-6-2c-1.500-6-2-15-1.500-22z" fill="url(#body)"/>
<path d="M12.500 44c1-6 5-12 10-17l2.500-.5c-2 8-2.500 25-1 38.500l-4.500 3-6-2c-1.500-6-1.500-15-1-22z" fill="#8b8e90"/>
<path d="M27 28c12-1.500 28-1.500 39 0l6.500 10.500c-12 1.500-38 1.500-48.500.5z" fill="url(#ws)"/>
<path d="M14 37.500c2-1.500 6-1.500 8 0l.5 2.500h-8z" fill="#dadcdc"/><path d="M14 39.500h9v1.500h-9z" fill="#2e3236"/>
<path d="M41 49.500c10-1 23-1 33 0l-3 6c-8 .8-19 .8-27 0z" fill="#3a3f45"/><path d="M43 52h29" stroke="#9a9da0" stroke-width=".8"/><circle cx="59" cy="52" r="2" fill="#b9bcbe"/>
<path d="M26 48c5 0 10 1.500 15 5.500-4 1-9 .5-13-1.500z" fill="#eceeee"/><path d="M75 48.500c3-.5 5 0 6.500 1.500-.5 2.500-3 4-6.500 4.500z" fill="#eceeee"/>
<rect x="40" y="62.500" width="37" height="5" rx="1.500" fill="#23272a"/>
<rect x="51" y="59" width="19" height="4.200" fill="#f6f6f4"/><rect x="54" y="60.300" width="13" height="1.600" fill="#9b9b98"/>
<ellipse cx="31" cy="63.500" rx="2.600" ry="2.300" fill="#2b2f33"/><circle cx="31" cy="63.500" r="1.100" fill="#e8e8e8"/>
<ellipse cx="82" cy="63" rx="2.200" ry="2.200" fill="#2b2f33"/><circle cx="82" cy="63" r="1" fill="#e8e8e8"/>
<ellipse cx="23" cy="63.500" rx="3.200" ry="8.500" fill="#1b1e20"/><ellipse cx="22.600" cy="63.500" rx="1.700" ry="5.500" fill="#8d9092"/>
</g>
</svg>
<!-- editor -->
<div class="a" style="left:526px;top:734px;width:806px;height:136px;background:#f8f8f8;border:1px solid #dadada;border-radius:5px"></div>
<div class="a" style="left:527px;top:769px;width:804px;height:1px;background:#d8d8d8"></div>
<span class="a" style="left:541px;top:745px;font-size:16px;font-weight:700;color:#9a9a9a">B</span>
<span class="a" style="left:568px;top:745px;font-size:16px;font-weight:700;font-style:italic;color:#9a9a9a">I</span>
<span class="a" style="left:592px;top:745px;font-size:15px;font-weight:700;color:#9a9a9a;text-decoration:underline">U</span>
<span class="a" style="left:626px;top:745px;font-size:15px;font-weight:700;color:#9a9a9a;border-bottom:2px solid #9a9a9a;padding-bottom:0">A</span>
<span class="a" style="left:651px;top:746px;font-size:14px;font-weight:700;color:#9a9a9a">A<span style="font-size:8px;position:relative;top:-3px">↕</span></span>
<span class="a" style="left:677px;top:743px;font-size:11px;color:#9a9a9a">a<span style="font-size:13px;position:relative;top:4px">α</span></span>
<svg class="a" style="left:710px;top:748px" width="16" height="10" viewBox="0 0 16 10"><rect x="1" y="2" width="8" height="5.500" rx="2.700" fill="none" stroke="#9a9a9a" stroke-width="1.600"/><rect x="7" y="2" width="8" height="5.500" rx="2.700" fill="none" stroke="#9a9a9a" stroke-width="1.600"/></svg>
<svg class="a" style="left:736px;top:748px" width="16" height="13" viewBox="0 0 16 13"><rect x="1" y="2" width="8" height="5.500" rx="2.700" fill="none" stroke="#9a9a9a" stroke-width="1.600"/><rect x="7" y="2" width="8" height="5.500" rx="2.700" fill="none" stroke="#9a9a9a" stroke-width="1.600"/><path d="M9.500 8l4 4.500M13.500 8l-4 4.500" stroke="#8a8a8a" stroke-width="1.400"/></svg>
<svg class="a" style="left:771px;top:747px" width="13" height="12" viewBox="0 0 13 12"><path d="M0 1h10M0 4.300h13M0 7.600h9M0 11h12" stroke="#9a9a9a" stroke-width="1.600"/></svg>
<svg class="a" style="left:805px;top:747px" width="14" height="12" viewBox="0 0 14 12"><circle cx="1.800" cy="2" r="1.800" fill="#9a9a9a"/><circle cx="1.800" cy="9.500" r="1.800" fill="#9a9a9a"/><path d="M5.500 1h8.500M5.500 3.800h8.500M5.500 8.500h8.500M5.500 11.200h8.500" stroke="#9a9a9a" stroke-width="1.200"/></svg>
<svg class="a" style="left:831px;top:747px" width="14" height="13" viewBox="0 0 14 13"><path d="M1 0v4M0 8h2.500v1.500L0 12h3" stroke="#9a9a9a" stroke-width="1.100" fill="none"/><path d="M5.500 1h8.500M5.500 3.800h8.500M5.500 8.500h8.500M5.500 11.200h8.500" stroke="#9a9a9a" stroke-width="1.200"/></svg>
<svg class="a" style="left:856px;top:747px" width="15" height="12" viewBox="0 0 15 12"><path d="M7 0v12" stroke="#9a9a9a" stroke-width="1.200"/><path d="M9 1h6M9 4.300h6M9 7.600h6M9 11h6" stroke="#9a9a9a" stroke-width="1.200"/><path d="M0 6h5M3 4l2.200 2L3 8" stroke="#9a9a9a" stroke-width="1.100" fill="none"/></svg>
<span id="ph" class="a" style="left:534.800px;top:781px;font-size:15.500px;color:#b5b5b5">Напишите ответ…</span>
<!-- share -->
<span id="sh" class="a" style="left:311.400px;top:933.500px;font-size:14.500px;font-weight:700;color:#1c1c1c">Поделиться этой страницей</span>
<div class="a" style="left:311px;top:953px;width:1031px;height:1px;background:#dcdcdc"></div>
<div class="a" style="left:311px;top:960px;width:78px;height:20px;background:#1b95e0;border-radius:3px"></div>
<svg class="a" style="left:317px;top:964px" width="13" height="11" viewBox="0 0 24 20"><path d="M24 2.400a9.800 9.800 0 0 1-2.800.8A4.900 4.900 0 0 0 23.300.5a9.800 9.800 0 0 1-3.100 1.200 4.900 4.900 0 0 0-8.400 4.500A14 14 0 0 1 1.700 1a4.900 4.900 0 0 0 1.500 6.600 4.900 4.900 0 0 1-2.200-.6v.1a4.900 4.900 0 0 0 3.900 4.800 4.900 4.900 0 0 1-2.200.1 4.900 4.900 0 0 0 4.600 3.400A9.900 9.900 0 0 1 0 17.500 14 14 0 0 0 7.500 19.700c9.100 0 14-7.500 14-14v-.6A10 10 0 0 0 24 2.400z" fill="#fff"/></svg>
<span id="tw" class="a" style="left:334.700px;top:964.500px;font-size:11px;font-weight:700;color:#fff">Твитнуть</span>
<div class="a" style="left:389px;top:960px;width:32px;height:20px;background:#fff;border:1px solid #dcdcdc;border-radius:2px"></div>
<span class="a" style="left:394px;top:963.500px;font-size:12.500px;font-weight:700;color:#dc4a38;letter-spacing:-0.700px">G+1</span>
<div class="a" style="left:426px;top:960px;width:20px;height:20px;background:#fff;border:1px solid #d8d8d8;border-radius:2px"></div>
<svg class="a" style="left:422px;top:966px" width="5" height="8" viewBox="0 0 5 8"><path d="M5 0L.7 4 5 8" fill="#fff" stroke="#d0d0d0" stroke-width=".9"/></svg>
<span class="a" style="left:432.500px;top:964.500px;font-size:11px;color:#555">0</span>
<div class="a" style="left:479px;top:960px;width:103px;height:20px;background:#4c69ba;border-radius:2px;border:1px solid #3f5aa8"></div>
<div class="a" style="left:483px;top:963px;width:14px;height:14px;background:#fff;border-radius:1px"></div>
<span class="a" style="left:487px;top:963px;font-size:16px;font-weight:700;color:#4c69ba">f</span>
<span id="fbr" class="a" style="left:501.300px;top:964.500px;font-size:11.500px;font-weight:700;color:#fff">Я рекомендую</span>
<span id="fbt" class="a" style="left:587px;top:965px;font-size:11px;color:#333">Станьте первым, кто порекомендует это.</span>
<!-- footer -->
<div class="a" style="left:311px;top:985px;width:1281px;height:46px;border:1px solid #dadada;border-radius:3px;background:#ececec"></div>
<span id="ft" class="a" style="left:720px;top:1001px;font-size:13px;color:#9c9c9c">Certain XenForo add-ons by Waindigo™ ©2011-2013 Waindigo Enterprises Ltd.</span>
<!-- DirectUSB dialog -->
<div class="a" style="left:885px;top:301px;width:598px;height:653px;background:#f0f0f0;border:1px solid #737373;box-shadow:0 4px 13px 0 rgba(0,0,0,.28),0 0 2px rgba(0,0,0,.2)"></div>
<div class="a" style="left:886px;top:302px;width:596px;height:25px;background:#fff"></div>
<svg class="a" style="left:888px;top:305px" width="18" height="18" viewBox="0 0 18 18"><defs><linearGradient id="dug" x1="0" x2="0" y1="0" y2="1"><stop offset="0" stop-color="#86c864"/><stop offset="1" stop-color="#5a98aa"/></linearGradient></defs><text x=".8" y="8" font-family="Liberation Sans" font-size="9.500" font-weight="700" fill="#ecea2a" textLength="16" lengthAdjust="spacingAndGlyphs">DU</text><path d="M9 9.500L17 16.800H1z" fill="url(#dug)"/></svg>
<span id="dt" class="a du" style="left:910px;top:308px">DirectUSB</span>
<svg class="a" style="left:1362px;top:313px" width="12" height="2" viewBox="0 0 12 2"><rect width="11" height="1.200" y=".4" fill="#111"/></svg>
<svg class="a" style="left:1408px;top:309px" width="11" height="11" viewBox="0 0 11 11"><rect x=".5" y=".5" width="9.500" height="9.500" fill="none" stroke="#c8c8c8"/></svg>
<svg class="a" style="left:1453px;top:309px" width="12" height="12" viewBox="0 0 12 12"><path d="M.5 .5l10.500 10.500M11 .5L.5 11" stroke="#111" stroke-width="1.200"/></svg>
<!-- config group -->
<div class="a" style="left:898px;top:347px;width:466px;height:66px;border:1px solid #dcdcdc"></div>
<span class="a du" style="left:904px;top:341px;background:#f0f0f0;padding:0 2px">Config</span>
<span class="a du" style="left:907px;top:376px">Board:</span>
<div class="a" style="left:947px;top:377px;width:102px;height:21px;background:#cce4f7;border:1px solid #0078d7"></div>
<span class="a du" style="left:951px;top:381px">a2sbub</span>
<svg class="a chev" style="left:1035.5px;top:384px" width="9" height="6" viewBox="0 0 9 6"><path d="M.5 .8l4 4 4-4" stroke="#333" fill="none" stroke-width="1.100"/></svg>
<span class="a du" style="left:1058px;top:381px">DRAM:</span>
<div class="a" style="left:1103px;top:377px;width:76px;height:21px;background:#e3e3e3;border:1px solid #adadad"></div>
<span class="a du" style="left:1107px;top:382px">216 MHz</span>
<svg class="a chev" style="left:1165.5px;top:385px" width="9" height="6" viewBox="0 0 9 6"><path d="M.5 .8l4 4 4-4" stroke="#333" fill="none" stroke-width="1.100"/></svg>
<span class="a du" style="left:1187px;top:380px">Core:</span>
<div class="a" style="left:1222px;top:377px;width:71px;height:21px;background:#cccccc;border:1px solid #bfbfbf"></div>
<span class="a du" style="left:1226px;top:382px;color:#8e8e8e">216 MHz</span>
<svg class="a chev" style="left:1279.5px;top:385px" width="9" height="6" viewBox="0 0 9 6"><path d="M.5 .8l4 4 4-4" stroke="#a5a5a5" fill="none" stroke-width="1.100"/></svg>
<div class="a btn" style="left:1302px;top:377px;width:46px;height:23px"><span>Edit</span></div>
<!-- right buttons -->
<div class="a btn" style="left:1371px;top:341px;width:103px;height:32px"><span>Connect</span></div>
<div class="a btn" style="left:1371px;top:381px;width:103px;height:32px"><span>DownLoad</span></div>
<div class="a btn" style="left:1371px;top:421px;width:103px;height:32px"><span>MemoryTest</span></div>
<div class="a btn" style="left:1371px;top:461px;width:103px;height:32px"><span>Upload</span></div>
<!-- tabs -->
<div class="a" style="left:898px;top:440px;width:468px;height:282px;background:#fff;border:1px solid #dcdcdc"></div>
<div class="a" style="left:898px;top:421px;width:60px;height:20px;background:#fff;border:1px solid #dcdcdc;border-bottom:none"></div>
<span class="a du" style="left:906px;top:424px">Download</span>
<div class="a" style="left:1049px;top:423px;width:43px;height:18px;background:#f0f0f0;border:1px solid #dcdcdc;border-bottom:none"></div>
<span class="a du" style="left:1058px;top:426px">MAC</span>
<!-- rows -->
<div class="a rad" style="left:922px;top:465px"><i></i></div>
<span class="a du" style="left:941px;top:466px">BST</span>
<div class="a chk" style="left:1134px;top:465px"></div>
<span class="a du" style="left:1153px;top:466px">HAL</span>
<div class="a" style="left:922px;top:486px;width:346px;height:21px;background:#fff;border:1px solid #7a7a7a"></div>
<svg class="a chev" style="left:1254.5px;top:494px" width="9" height="6" viewBox="0 0 9 6"><path d="M.5 .8l4 4 4-4" stroke="#333" fill="none" stroke-width="1.100"/></svg>
<div class="a btn" style="left:1275px;top:484px;width:73px;height:23px"><span>Choose</span></div>
<div class="a rad" style="left:922px;top:517px"></div>
<span class="a du" style="left:941px;top:518px">FW</span>
<div class="a chk dis" style="left:1134px;top:516px"></div>
<span class="a du" style="left:1153px;top:517px;color:#6a6a6a">Verify</span>
<div class="a cbd" style="left:922px;top:538px"></div>
<svg class="a chev" style="left:1254.5px;top:546px" width="9" height="6" viewBox="0 0 9 6"><path d="M.5 .8l4 4 4-4" stroke="#a5a5a5" fill="none" stroke-width="1.100"/></svg>
<div class="a btn bd" style="left:1275px;top:536px;width:73px;height:23px"><span>Choose</span></div>
<div class="a rad" style="left:922px;top:569px"></div>
<span class="a du" style="left:941px;top:570px">Kernel</span>
<div class="a cbd" style="left:922px;top:590px"></div>
<svg class="a chev" style="left:1254.5px;top:598px" width="9" height="6" viewBox="0 0 9 6"><path d="M.5 .8l4 4 4-4" stroke="#a5a5a5" fill="none" stroke-width="1.100"/></svg>
<div class="a btn bd" style="left:1275px;top:588px;width:73px;height:23px"><span>Choose</span></div>
<div class="a chk dis" style="left:922px;top:620px"><svg width="11" height="11" viewBox="0 0 11 11" style="position:absolute;left:0;top:0"><path d="M2 5.500l2.500 2.800L9.300 2.500" stroke="#b4b4b4" stroke-width="1.200" fill="none"/></svg></div>
<span class="a du" style="left:941px;top:621px;color:#4a4a4a">DSP Images Directory</span>
<div class="a cbd" style="left:922px;top:642px"></div>
<svg class="a chev" style="left:1254.5px;top:650px" width="9" height="6" viewBox="0 0 9 6"><path d="M.5 .8l4 4 4-4" stroke="#a5a5a5" fill="none" stroke-width="1.100"/></svg>
<div class="a btn bd" style="left:1275px;top:640px;width:73px;height:23px"><span>Choose</span></div>
<!-- status row -->
<span class="a du" style="left:907px;top:738px">Status:</span>
<div class="a" style="left:973px;top:729px;width:25px;height:25px;border-radius:50%;background:radial-gradient(circle at 35% 25%,#f2f2f2 0,#cfcfcf 30%,#c4c4c4 100%)"></div>
<span class="a" style="left:973px;top:734px;font-size:13.500px;font-weight:700;color:#1464d2;letter-spacing:.3px">Idle</span>
<span class="a du" style="left:1073px;top:738px">Time: 00:00</span>
<span class="a du" style="left:1166px;top:736px">Level:</span>
<div class="a" style="left:1209px;top:732px;width:78px;height:21px;background:#e3e3e3;border:1px solid #adadad"></div>
<span class="a du" style="left:1213px;top:737px">ERROR</span>
<svg class="a chev" style="left:1273.5px;top:740px" width="9" height="6" viewBox="0 0 9 6"><path d="M.5 .8l4 4 4-4" stroke="#333" fill="none" stroke-width="1.100"/></svg>
<div class="a btn" style="left:1294px;top:731px;width:73px;height:23px"><span>Clear</span></div>
<!-- log -->
<div class="a" style="left:902px;top:761px;width:470px;height:149px;background:#fff;border:1px solid #555;border-top-color:#7d7d7d"></div>
<div class="a" style="left:1354px;top:762px;width:17px;height:147px;background:#f0f0f0"></div>
<div class="a" style="left:903px;top:892px;width:468px;height:17px;background:#f0f0f0"></div>
<svg class="a" style="left:1358px;top:768px" width="9" height="6" viewBox="0 0 9 6"><path d="M.8 5l3.700-3.700L8.200 5" stroke="#a0a0a0" fill="none" stroke-width="1.300"/></svg>
<svg class="a" style="left:1358px;top:879px" width="9" height="6" viewBox="0 0 9 6"><path d="M.8 1l3.700 3.700L8.200 1" stroke="#a0a0a0" fill="none" stroke-width="1.300"/></svg>
<svg class="a" style="left:909px;top:896px" width="6" height="9" viewBox="0 0 6 9"><path d="M5 .8L1.300 4.500 5 8.200" stroke="#a0a0a0" fill="none" stroke-width="1.300"/></svg>
<svg class="a" style="left:1342px;top:896px" width="6" height="9" viewBox="0 0 6 9"><path d="M1 .8l3.700 3.700L1 8.200" stroke="#a0a0a0" fill="none" stroke-width="1.300"/></svg>
<span class="a du" style="left:905px;top:765px">Set message level: 1</span>
<div class="a" style="left:902px;top:917px;width:470px;height:25px;background:#e6e6e6;border:1px solid #bcbcbc"></div>
<!-- dropdown list -->
<div class="a" style="left:947px;top:397px;width:102px;height:171px;background:#fff;border:1px solid #0078d7;box-shadow:2px 2px 3px rgba(0,0,0,.35)"></div>
<div class="a" style="left:948px;top:476px;width:100px;height:13px;background:#0078d7"></div>
<div id="ddl" class="a du" style="left:950px;top:398.500px;line-height:13px;white-space:pre">a2sbub
a5lbub
a5sbub
a5sevk
a7bub
a7evk
<span style="color:#fff">a7lbub</span>
a7levk
a7lrdb
civet
coconut
i1bub
i1evk</div>
<!-- cursor -->
<svg class="a" style="left:1013px;top:484px" width="14" height="21" viewBox="0 0 14 21"><path d="M1 1v16l3.800-3.600 2.600 6.200 2.500-1-2.600-6.100H12.500z" fill="#fff" stroke="#000" stroke-width="1.100" stroke-linejoin="round"/></svg>
<!-- 360 total security -->
<div class="a" style="left:1660px;top:781px;width:250px;height:174px;background:#fff;box-shadow:0 1px 4px rgba(0,0,0,.25)"></div>
<div class="a" style="left:1660px;top:781px;width:250px;height:22px;background:#2c78d6"></div>
<span id="ts" class="a" style="left:1665.600px;top:786.600px;font-size:12px;color:#fff">360 TOTAL SECURITY</span>
<svg class="a" style="left:1847px;top:786px" width="12" height="12" viewBox="0 0 12 12"><circle cx="5" cy="5" r="3.600" fill="none" stroke="#fff" stroke-width="1.800"/><path d="M7.500 7.500l3.500 3.500" stroke="#fff" stroke-width="2"/></svg>
<svg class="a" style="left:1869px;top:787px" width="11" height="10" viewBox="0 0 11 10"><path d="M0 1.200h11M0 5h11M0 8.800h11" stroke="#fff" stroke-width="1.700"/></svg>
<div class="a" style="left:1893px;top:791px;width:10px;height:2px;background:#fff"></div>
<div class="a" style="left:1660px;top:873px;width:250px;height:1px;background:#e6e6e6"></div>
<div class="a" style="left:1660px;top:944px;width:250px;height:1px;background:#e6e6e6"></div>
<div class="a" style="left:1910px;top:822px;width:8px;height:126px;background:#c1c1c1"></div>
<!-- row 1 -->
<svg class="a" style="left:1677px;top:827px" width="22" height="22" viewBox="0 0 22 22"><circle cx="11" cy="11" r="11" fill="#7fc62a"/><path d="M5.500 10.500l4.200 4.500 7.800-9" stroke="#fff" stroke-width="2.600" fill="none"/></svg>
<span class="a" style="left:1715px;top:825.800px;font-size:12px;color:#6a6a6a">(I :)</span>
<span id="d1" class="a" style="left:1715px;top:845px;font-size:12.500px;color:#6a6a6a">4.9G/59.4G</span>
<svg class="a" style="left:1811px;top:818px" width="40" height="40" viewBox="0 0 40 40"><circle cx="20" cy="20" r="18" fill="#fff" stroke="#2e7bd8" stroke-width="2.200"/><path d="M12 13.500h6l1.500 2H28V27H12z" fill="#2e7bd8"/><path d="M12 18.200h16" stroke="#fff" stroke-width="1"/></svg>
<svg class="a" style="left:1859px;top:818px" width="40" height="40" viewBox="0 0 40 40"><circle cx="20" cy="20" r="18" fill="#fff" stroke="#a8a8a8" stroke-width="2.200"/><path d="M20 15l6 6H14z" fill="#a8a8a8"/><rect x="14" y="22.500" width="12" height="2" fill="#a8a8a8"/></svg>
<!-- row 2 -->
<svg class="a" style="left:1677px;top:898px" width="22" height="22" viewBox="0 0 22 22"><circle cx="11" cy="11" r="11" fill="#7fc62a"/><path d="M5.500 10.500l4.200 4.500 7.800-9" stroke="#fff" stroke-width="2.600" fill="none"/></svg>
<span class="a" style="left:1715px;top:896.800px;font-size:12px;color:#6a6a6a">(H :)</span>
<span id="d2" class="a" style="left:1715px;top:916px;font-size:12.500px;color:#6a6a6a">232.6M/1.8G</span>
<svg class="a" style="left:1811px;top:889px" width="40" height="40" viewBox="0 0 40 40"><circle cx="20" cy="20" r="18" fill="#fff" stroke="#2e7bd8" stroke-width="2.200"/><path d="M12 13.500h6l1.500 2H28V27H12z" fill="#2e7bd8"/><path d="M12 18.200h16" stroke="#fff" stroke-width="1"/></svg>
<svg class="a" style="left:1859px;top:889px" width="40" height="40" viewBox="0 0 40 40"><circle cx="20" cy="20" r="18" fill="#fff" stroke="#a8a8a8" stroke-width="2.200"/><path d="M20 15l6 6H14z" fill="#a8a8a8"/><rect x="14" y="22.500" width="12" height="2" fill="#a8a8a8"/></svg>
<!-- taskbar -->
<div class="a" style="left:0;top:1040px;width:1920px;height:40px;background:#060a0b"></div>
<div class="a" style="left:837px;top:1040px;width:48px;height:40px;background:#353b3b"></div>
<div class="a" style="left:155px;top:1078px;width:40px;height:2px;background:#7bb6ea"></div>
<div class="a" style="left:645px;top:1078px;width:40px;height:2px;background:#7bb6ea"></div>
<div class="a" style="left:837px;top:1078px;width:48px;height:2px;background:#7bb6ea"></div>
<!-- start -->
<svg class="a" style="left:11px;top:1047px" width="27" height="26" viewBox="0 0 27 26"><path d="M0 3.600L11 2v10H0zM12.500 1.800L27 0v12H12.500zM0 13.500h11v10L0 22zM12.500 13.500H27V26l-14.500-2z" fill="#fff"/></svg>
<svg class="a" style="left:63px;top:1051px" width="19" height="19" viewBox="0 0 19 19"><circle cx="11.500" cy="7" r="5.300" fill="none" stroke="#fff" stroke-width="1.500"/><path d="M7.800 10.800L1 17.800" stroke="#fff" stroke-width="1.700"/></svg>
<!-- edge -->
<svg class="a" style="left:115px;top:1049px" width="22" height="23" viewBox="0 0 22 23"><path d="M1 10C2 4 6.500 .5 12 .5c6 0 9.500 4.500 9.500 10v2.500H8c.3 3 2.800 4.500 6 4.500 2.500 0 4.500-.7 6.500-1.800v4.800c-2 1.200-4.800 2-8 2C6 22.500 2 18.500 2 13c0-3 1.500-5.500 4-7-1.800.6-3.800 2-5 4zM8 9h7.500c0-2.500-1.500-4-3.700-4S8.300 6.700 8 9z" fill="#1f7ad6"/></svg>
<!-- explorer -->
<svg class="a" style="left:163px;top:1051px" width="24" height="21" viewBox="0 0 24 21"><path d="M0 1h8l2 2h14v16H0z" fill="#f6c64e"/><path d="M1 5h22v14H1z" fill="#fbe08a"/><path d="M5 12h14v8H5z" fill="#35a6e6"/><path d="M9 16h6v4H9z" fill="#fbe08a"/><path d="M0 19h24v2H0z" fill="#e9b93c"/></svg>
<!-- store -->
<svg class="a" style="left:212px;top:1047px" width="23" height="26" viewBox="0 0 23 26"><path d="M7 7c0-6 9-6 9 0" fill="none" stroke="#fff" stroke-width="1.300"/><path d="M0 7.500L23 6v19L0 23.500z" fill="#fff"/><path d="M5 11.500l5.500-.4v4.500H5zM12 11l6-.5v5.100h-6zM5 17h5.500v4.600L5 21.300zM12 17h6v5l-6-.3z" fill="#060a0b"/></svg>
<!-- sound app -->
<svg class="a" style="left:260px;top:1048px" width="26" height="25" viewBox="0 0 26 25"><path d="M2 2q0-2 2-2h13l9 12.500L17 25H4q-2 0-2-2z" fill="#4a8ad0"/><path d="M2 2q0-2 2-2h13l9 12.500H2z" fill="#6fa6e0"/><path d="M6 9.500h3.500L14 6v13l-4.500-3.500H6z" fill="#fff"/><path d="M16 9.500a4 4 0 0 1 0 6M17.500 7a7 7 0 0 1 0 11" stroke="#fff" stroke-width="1.300" fill="none"/></svg>
<!-- vs -->
<svg class="a" style="left:309px;top:1049px" width="26" height="23" viewBox="0 0 26 23"><path d="M1 3l12 8.500L1 20z" fill="#6a3fb0"/><path d="M25 0v23L11 11.500z" fill="#c9b8ea"/><path d="M25 0v23l-6-4V4z" fill="#8f6bd0"/><path d="M1 3l3-1.500 10 10-10 10L1 20l8.500-8.500z" fill="#4f2d91"/></svg>
<!-- maps -->
<svg class="a" style="left:358px;top:1047px" width="26" height="26" viewBox="0 0 26 26"><rect x="1" y="9" width="22" height="17" fill="#cfe3b5"/><path d="M8 9v17M1 17h22M15 9l-4 17" stroke="#6fa0c8" stroke-width="1.500"/><rect x="1" y="9" width="7" height="8" fill="#8fc46a"/><path d="M17 0a7 7 0 0 1 7 7c0 4-4.500 7-7 13-2.500-6-7-9-7-13a7 7 0 0 1 7-7z" fill="#f39a1e"/><text x="13.500" y="11" font-family="Liberation Sans" font-size="10" font-weight="700" fill="#fff">2</text></svg>
<!-- box -->
<svg class="a" style="left:407px;top:1048px" width="26" height="26" viewBox="0 0 26 26"><path d="M2 6l10-5 11 4v13l-11 6L2 19z" fill="#d9a84a"/><path d="M2 6l10 4v14L2 19z" fill="#c08a34"/><path d="M12 10l11-5v13l-11 6z" fill="#e8c070"/><path d="M6 3.500l11 4.300v5l-2-.7V8.800L4 4.500z" fill="#f2dca0"/><circle cx="16" cy="16" r="5" fill="#bfe0f0" stroke="#e8e8e8" stroke-width="1.500"/><path d="M19.500 20l4.500 5" stroke="#e07a2a" stroke-width="2.500"/><rect x="6" y="17" width="2" height="2" fill="#c0392b"/></svg>
<!-- v app -->
<svg class="a" style="left:455px;top:1048px" width="26" height="24" viewBox="0 0 26 24"><path d="M1 6c2-2 6-2 8 0l4 12c1 2-1 5-4 4-2-.5-4-3-5-6z" fill="#1c5fa0"/><path d="M12 20c3-4 6-12 12-19l2 2c-4 6-7 13-9 19-2 2-5 0-5-2z" fill="#0c0f12"/><path d="M2 6.500c2-1.500 5-1.500 6.500 0l1 3c-2-1.500-5-1.500-7 .5z" fill="#3f8ad0"/></svg>
<!-- outlook -->
<svg class="a" style="left:506px;top:1049px" width="25" height="23" viewBox="0 0 25 23"><path d="M12 5h12.500v13H12z" fill="#fff"/><path d="M12 6l6.300 5 6.200-5v-1H12z" fill="#1565b8"/><path d="M12 6.500l6.300 5 6.200-5" stroke="#1565b8" fill="none" stroke-width="1.200"/><path d="M0 2.500L14 0v23L0 20.500z" fill="#1a6fc4"/><ellipse cx="7" cy="11.500" rx="3.200" ry="4" fill="none" stroke="#fff" stroke-width="1.800"/></svg>
<!-- paint -->
<svg class="a" style="left:554px;top:1047px" width="27" height="26" viewBox="0 0 27 26"><path d="M12 7c7 0 12 3 12 8s-4 8-9 8c-3 0-2-3-5-3-2 0-3 2-5 2-3 0-4-3-4-6 0-5 5-9 11-9z" fill="#c8d8e8"/><path d="M12 8.500c6 0 10.500 2.500 10.500 6.500s-3.500 6.500-7.500 6.500c-2.500 0-2-3-5-3-2 0-3 2-5 2-2 0-2.500-2-2.500-4.500 0-4 4-7.500 9.500-7.500z" fill="#9fb6cc"/><circle cx="7" cy="13" r="1.800" fill="#d43a2a"/><circle cx="11.500" cy="10.800" r="1.800" fill="#f0c020"/><circle cx="16.500" cy="11.500" r="1.800" fill="#3aa03a"/><circle cx="6.500" cy="17.500" r="1.700" fill="#2a6ad0"/><path d="M25 0l1.500 1.500L14 22l-2.500 2 .5-3z" fill="#d98a3a"/><path d="M23 1l3 2 .5-2.500z" fill="#f0d0a0"/></svg>
<!-- calc -->
<svg class="a" style="left:606px;top:1047px" width="20" height="26" viewBox="0 0 20 26"><rect width="20" height="26" fill="#fff"/><rect x="2.500" y="2.500" width="15" height="4" fill="#060a0b"/><path d="M2 10.500h16M2 15h16M2 19.500h16M6.500 9v15M11 9v15M15.500 9v15" stroke="#060a0b" stroke-width="1.200"/><rect x="0" y="8.500" width="2" height="17.500" fill="#fff"/><rect x="18" y="8.500" width="2" height="17.500" fill="#fff"/><rect x="0" y="24" width="20" height="2" fill="#fff"/></svg>
<!-- yandex -->
<svg class="a" style="left:653px;top:1048px" width="24" height="24" viewBox="0 0 24 24"><circle cx="12" cy="12" r="12" fill="#f4f4f4"/><path d="M6.500 5l5.500 8v7M17.500 5L12 13" stroke="#e02020" stroke-width="2.600" fill="none" stroke-linecap="round"/></svg>
<!-- usb -->
<svg class="a" style="left:700px;top:1046px" width="28" height="26" viewBox="0 0 28 26"><path d="M1 15h16M6 15l4-5h4M9 15l4 5h4" stroke="#15181a" stroke-width="2.200" fill="none"/><circle cx="3" cy="15" r="2.500" fill="#15181a"/><path d="M17 12l5 3-5 3z" fill="#15181a"/><rect x="13" y="8.500" width="3.500" height="3.500" fill="#15181a"/><circle cx="17.500" cy="20" r="2" fill="#15181a"/><path d="M14 2l5 5M19 7V3.500M19 7h-3.500M26 14l-5-5M21 9v3.500M21 9h3.500" stroke="#2f8ae0" stroke-width="1.700" fill="none"/></svg>
<!-- skype -->
<svg class="a" style="left:750px;top:1047px" width="26" height="26" viewBox="0 0 26 26"><path d="M12 3c3-2 8-1 9 2 3 2 4 6 3 9 1 4-1 8-5 9-3 2-8 2-11 0-4-1-6-5-5-9C1 10 4 4 12 3z" fill="#1ea7e6"/><path d="M17 0l7 7-3 1-5-5z" fill="#4a8ad0" opacity=".8"/><text x="7.500" y="19.500" font-family="Liberation Sans" font-size="16" font-weight="700" fill="#fff">S</text></svg>
<!-- camera -->
<svg class="a" style="left:800px;top:1051px" width="25" height="20" viewBox="0 0 25 20"><path d="M0 4h6.500L8.500 0h8l2 4H25v16H0z" fill="#fff"/><circle cx="12.500" cy="11.500" r="5.800" fill="#060a0b"/><circle cx="12.500" cy="11.500" r="3.600" fill="none" stroke="#fff" stroke-width="0"/><path d="M8.500 13a4.500 4.500 0 0 0 8.500 0" stroke="#fff" stroke-width="1" fill="none"/><rect x="21" y="6" width="2" height="1.500" fill="#060a0b"/></svg>
<!-- DU -->
<span class="a" style="left:849px;top:1046px;font-size:15px;font-weight:700;color:#e8e23a;letter-spacing:.3px">DU</span>
<svg class="a" style="left:848px;top:1060px" width="26" height="13" viewBox="0 0 26 13"><path d="M13 0L26 13H0z" fill="#8fbf9a"/><path d="M13 0l6.500 6.500h-13z" fill="#b5d2c8"/><path d="M3 13l10-10 10 10" fill="none" stroke="#7aa6b0" stroke-width=".8"/></svg>
<!-- tray -->
<svg class="a" style="left:1567px;top:1054px" width="18" height="12" viewBox="0 0 18 12"><path d="M4 12a4 4 0 0 1-.5-7.900A5 5 0 0 1 13 3.500a4.300 4.300 0 0 1 1 8.500z" fill="#9a9a9a"/><path d="M7 12a3 3 0 0 1 0-6 4 4 0 0 1 7.500 1A2.600 2.600 0 0 1 15 12z" fill="#b8b8b8"/></svg>
<svg class="a" style="left:1592px;top:1051px" width="16" height="17" viewBox="0 0 16 17"><path d="M3.500 0h3.500v8h3L5.200 14 0 8h3.500z" fill="#fff"/><circle cx="11" cy="12.500" r="3.800" fill="#fff"/><circle cx="11" cy="12.500" r="1.500" fill="#060a0b"/><path d="M11 7.800v9.400M6.300 12.500h9.400M7.700 9.200l6.600 6.600M14.300 9.200l-6.600 6.600" stroke="#fff" stroke-width="1.400"/><circle cx="11" cy="12.500" r="1.400" fill="#060a0b"/></svg>
<svg class="a" style="left:1616px;top:1052px" width="17" height="17" viewBox="0 0 17 17"><circle cx="8.500" cy="8.500" r="8.500" fill="#f2d21e"/><path d="M1 5a8.500 8.500 0 0 1 15 0c-2.500 1.500-4 1-7.500-.5S3 4 1 5zM1.500 13c2-1.500 4-.5 7 1s5 1 7-1a8.500 8.500 0 0 1-14 0z" fill="#5ab030"/><path d="M8.500 4.500v8M4.500 8.500h8" stroke="#3a9a2a" stroke-width="2.200"/></svg>
<svg class="a" style="left:1640px;top:1055px" width="17" height="11" viewBox="0 0 17 11"><rect x=".8" y=".8" width="13.500" height="9.400" fill="none" stroke="#fff" stroke-width="1.500"/><rect x="2.800" y="2.800" width="9.500" height="5.400" fill="#fff"/><rect x="15" y="3.500" width="1.800" height="4" fill="#fff"/></svg>
<div class="a" style="left:1664px;top:1052px;width:15px;height:17px;background:#000"></div>
<span class="a" style="left:1667px;top:1053px;font-size:15px;color:#fff">9</span>
<svg class="a" style="left:1688px;top:1051px" width="17" height="18" viewBox="0 0 17 18"><rect x=".8" y=".8" width="15.400" height="16.400" fill="#c8c8c8" stroke="#3a3a9a" stroke-width="1.200"/><rect x="1.500" y="12.500" width="6.300" height="4" fill="#1a1a3a" stroke="#5a5ac0" stroke-width=".8"/><rect x="9.200" y="12.500" width="6.300" height="4" fill="#1a1a3a" stroke="#5a5ac0" stroke-width=".8"/></svg>
<svg class="a" style="left:1714px;top:1051px" width="16" height="18" viewBox="0 0 16 18"><rect x="2.500" y=".7" width="5" height="4" fill="none" stroke="#fff" stroke-width="1.100"/><rect x="1" y="4.700" width="8" height="12" rx="1" fill="none" stroke="#fff" stroke-width="1.200"/><rect x="3.700" y="1.800" width="1" height="1.200" fill="#fff"/><rect x="5.500" y="1.800" width="1" height="1.200" fill="#fff"/><path d="M9.500 14l2 2.500 4-5" stroke="#9a9a9a" stroke-width="1.200" fill="none"/></svg>
<svg class="a" style="left:1737px;top:1053px" width="16" height="15" viewBox="0 0 16 15"><path d="M1 14A13 13 0 0 1 14 1" stroke="#fff" stroke-width="1.300" fill="none"/><path d="M4.500 14A9.500 9.500 0 0 1 14 4.500" stroke="#fff" stroke-width="1.300" fill="none"/><path d="M8 14a6 6 0 0 1 6-6" stroke="#fff" stroke-width="1.300" fill="none"/><rect x="11" y="11" width="3.500" height="3.500" fill="#fff"/></svg>
<svg class="a" style="left:1759px;top:1052px" width="18" height="16" viewBox="0 0 18 16"><path d="M.7 5.500h3L8 1.500v13l-4.300-4h-3z" fill="none" stroke="#fff" stroke-width="1.200"/><path d="M10 5.500a3.500 3.500 0 0 1 0 5M12 3.500a6.500 6.500 0 0 1 0 9" stroke="#fff" stroke-width="1.200" fill="none"/><path d="M14.200 1.500a9.500 9.500 0 0 1 0 13" stroke="#8a8a8a" stroke-width="1.200" fill="none"/></svg>
<svg class="a" style="left:1783px;top:1051px" width="18" height="18" viewBox="0 0 18 18"><path d="M.8 .8h16.400v12.400H12l-3 3.300-3-3.300H.8z" fill="none" stroke="#fff" stroke-width="1.300"/><path d="M3.500 4.500h11M3.500 7h11M3.500 9.500h7" stroke="#fff" stroke-width="1.100"/></svg>
<span id="ru" class="a" style="left:1811px;top:1054px;font-size:12px;color:#fff">РУС</span>
<span id="ck" class="a" style="left:1866px;top:1045px;font-size:12px;color:#fff">0:59</span>
<span id="dt2" class="a" style="left:1850px;top:1061px;font-size:12px;color:#fff">11.12.2015</span>
<div class="a" style="left:1915px;top:1040px;width:1px;height:40px;background:#5a5a5a"></div>
</div>
</body>
</html>
